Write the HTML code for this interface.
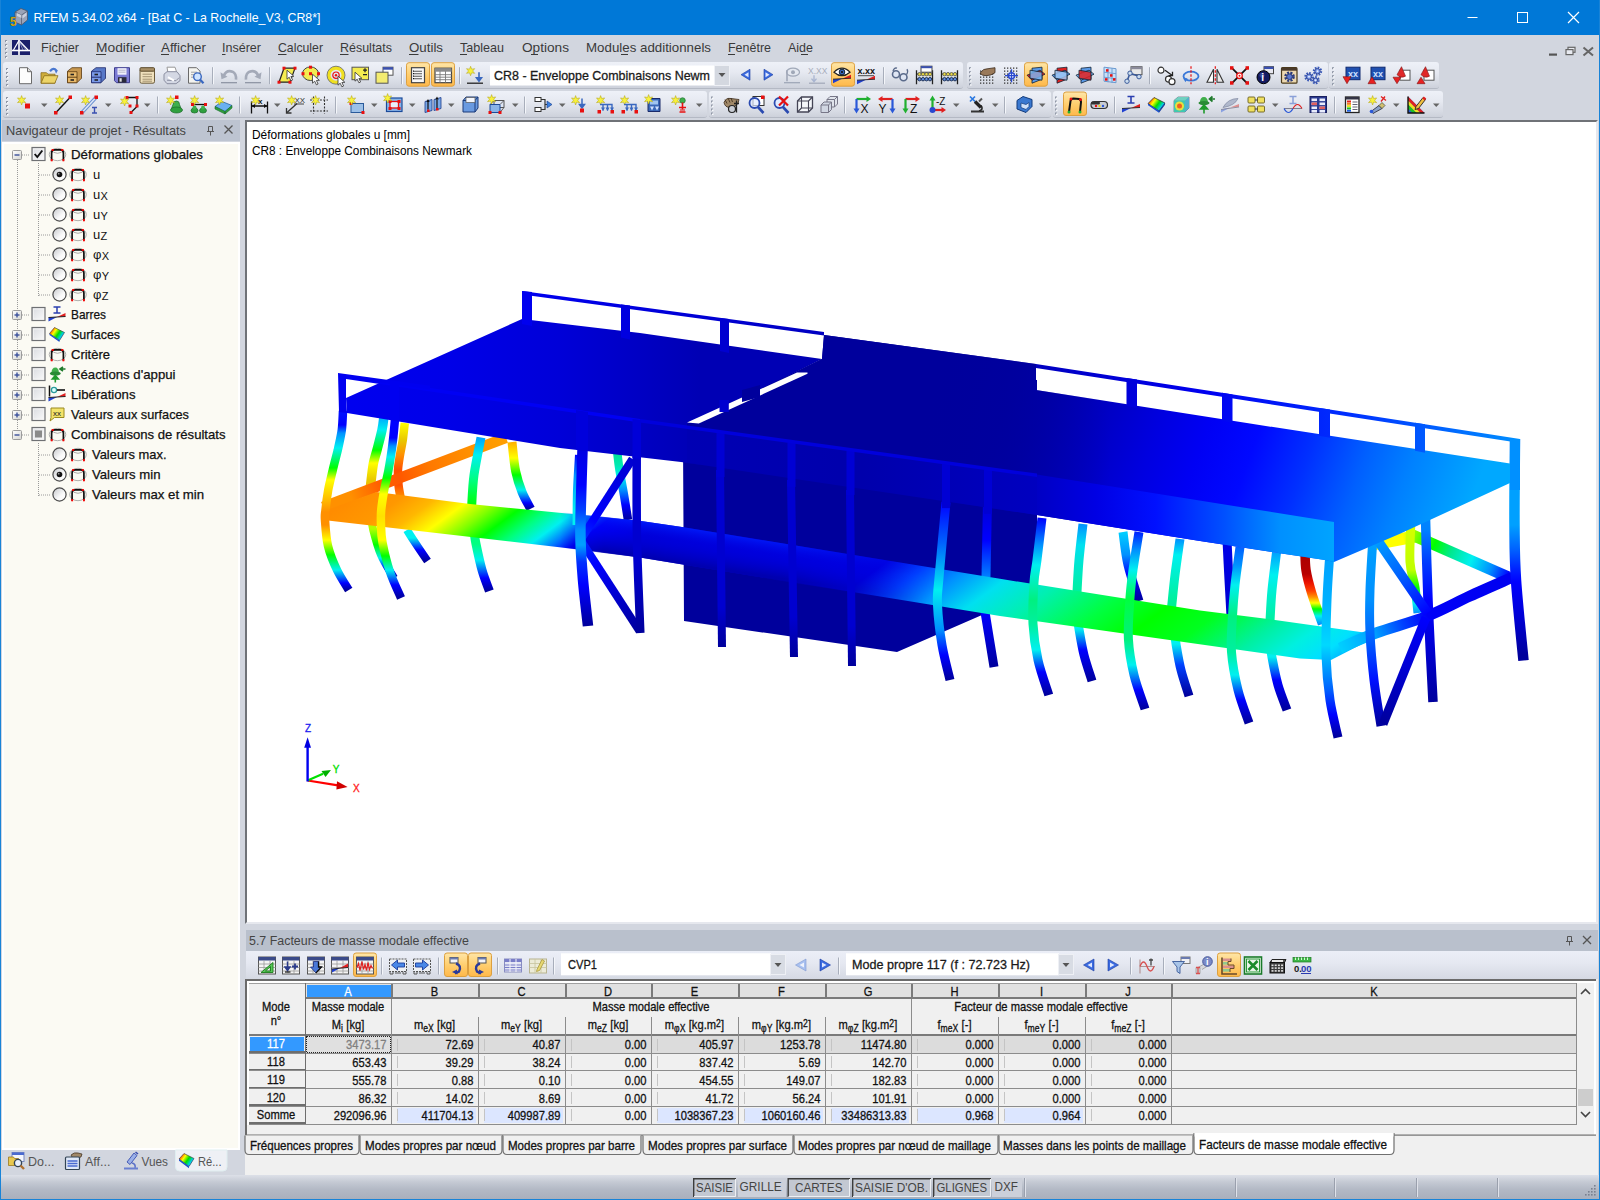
<!DOCTYPE html>
<html lang="fr"><head><meta charset="utf-8"><title>RFEM 5.34.02 x64 - [Bat C - La Rochelle_V3, CR8*]</title>
<style>
html,body{margin:0;padding:0;}
body{width:1600px;height:1200px;overflow:hidden;position:relative;background:#d2d6df;font-family:"Liberation Sans",sans-serif;font-size:12px;color:#222;}
div,svg{position:absolute;box-sizing:border-box;}
svg text{font-family:"Liberation Sans",sans-serif;}
svg.tx text{stroke:currentColor;stroke-width:0.25px;}
#titlebar{left:0;top:0;width:1600px;height:35px;background:#0078d7;}
#menubar{left:1px;top:35px;width:1598px;height:26px;background:#d2d6df;}
.tb{background:linear-gradient(#eef1f8 0%,#e6e9f1 40%,#d6dae3 80%,#cdd1db 100%);border-radius:3px;height:27px;border-bottom:1px solid #b4b9c4;}
#lborder{left:0;top:0;width:1px;height:1200px;background:#1883d7;}
#rborder{left:1599px;top:0;width:1px;height:1200px;background:#1883d7;}
#bborder{left:0;top:1199px;width:1600px;height:1px;background:#1883d7;}
#viewport{left:245px;top:120px;width:1353px;height:804px;background:#fff;border:2px solid #6f7277;border-right-color:#e6e8ee;border-bottom-color:#e6e8ee;overflow:hidden;}
#navhead{left:2px;top:120px;width:238px;height:21px;background:#bdc4d1;}
#navtree{left:2px;top:142px;width:238px;height:1008px;background:#fbfaf3;border:2px solid #fff;}
#status{left:1px;top:1175px;width:1598px;height:24px;background:linear-gradient(#dde0e8 0%,#c4c9d3 30%,#b3b9c5 60%,#a9afbc 100%);}

</style></head>
<body>
<div id="titlebar"></div>
<div id="menubar"></div>
<div class="tb" style="left:3px;top:62px;width:960px;"></div>
<div class="tb" style="left:967px;top:62px;width:361px;"></div>
<div class="tb" style="left:1329px;top:62px;width:110px;"></div>
<div class="tb" style="left:3px;top:90.5px;width:704px;"></div>
<div class="tb" style="left:709px;top:90.5px;width:342px;"></div>
<div class="tb" style="left:1053px;top:90.5px;width:390px;"></div>
<div id="status"></div>
<div id="lborder"></div><div id="rborder"></div><div id="bborder"></div>
<svg width="1600" height="1200" style="left:0;top:0;pointer-events:none;z-index:5">
<text x="33.5" y="22" font-size="13.5" fill="#fff" textLength="287" lengthAdjust="spacingAndGlyphs">RFEM 5.34.02 x64 - [Bat C - La Rochelle_V3, CR8*]</text>
<text x="41" y="52" font-size="12.4" fill="#3a3a3a" textLength="38" lengthAdjust="spacingAndGlyphs">Fichier</text>
<text x="96" y="52" font-size="12.4" fill="#3a3a3a" textLength="49" lengthAdjust="spacingAndGlyphs">Modifier</text>
<text x="161" y="52" font-size="12.4" fill="#3a3a3a" textLength="45" lengthAdjust="spacingAndGlyphs">Afficher</text>
<text x="222" y="52" font-size="12.4" fill="#3a3a3a" textLength="39" lengthAdjust="spacingAndGlyphs">Insérer</text>
<text x="278" y="52" font-size="12.4" fill="#3a3a3a" textLength="45" lengthAdjust="spacingAndGlyphs">Calculer</text>
<text x="340" y="52" font-size="12.4" fill="#3a3a3a" textLength="52" lengthAdjust="spacingAndGlyphs">Résultats</text>
<text x="409" y="52" font-size="12.4" fill="#3a3a3a" textLength="34" lengthAdjust="spacingAndGlyphs">Outils</text>
<text x="460" y="52" font-size="12.4" fill="#3a3a3a" textLength="44" lengthAdjust="spacingAndGlyphs">Tableau</text>
<text x="522" y="52" font-size="12.4" fill="#3a3a3a" textLength="47" lengthAdjust="spacingAndGlyphs">Options</text>
<text x="586" y="52" font-size="12.4" fill="#3a3a3a" textLength="125" lengthAdjust="spacingAndGlyphs">Modules additionnels</text>
<text x="728" y="52" font-size="12.4" fill="#3a3a3a" textLength="43" lengthAdjust="spacingAndGlyphs">Fenêtre</text>
<text x="788" y="52" font-size="12.4" fill="#3a3a3a" textLength="25" lengthAdjust="spacingAndGlyphs">Aide</text>
<path d="M55.5 54.500H61.5" stroke="#3a3a3a" stroke-width="1"/>
<path d="M96 54.500H106" stroke="#3a3a3a" stroke-width="1"/>
<path d="M161 54.500H169" stroke="#3a3a3a" stroke-width="1"/>
<path d="M222 54.500H225.5" stroke="#3a3a3a" stroke-width="1"/>
<path d="M278 54.500H286.5" stroke="#3a3a3a" stroke-width="1"/>
<path d="M340 54.500H348.5" stroke="#3a3a3a" stroke-width="1"/>
<path d="M409 54.500H418.5" stroke="#3a3a3a" stroke-width="1"/>
<path d="M460 54.500H467" stroke="#3a3a3a" stroke-width="1"/>
<path d="M531 54.500H538" stroke="#3a3a3a" stroke-width="1"/>
<path d="M621 54.500H628" stroke="#3a3a3a" stroke-width="1"/>
<path d="M728 54.500H735" stroke="#3a3a3a" stroke-width="1"/>
<path d="M801 54.500H808" stroke="#3a3a3a" stroke-width="1"/>
<path d="M1467.5 17.5h10" stroke="#fff" stroke-width="1" fill="none"/>
<rect x="1517.5" y="12.5" width="10" height="10" stroke="#fff" stroke-width="1" fill="none"/>
<path d="M1568 12l11 11M1579 12l-11 11" stroke="#fff" stroke-width="1.2" fill="none"/>
<path d="M1549 54.6h8" stroke="#555" stroke-width="2.2"/>
<rect x="1568" y="47.3" width="7" height="5" stroke="#666" stroke-width="1.2" fill="#e8eaf0"/><rect x="1566" y="49.6" width="7" height="5" stroke="#666" stroke-width="1.2" fill="#e8eaf0"/>
<path d="M1583.5 47.5l9.5 8M1593 47.5l-9.5 8" stroke="#666" stroke-width="2"/>
<rect x="693" y="1178" width="43" height="19" fill="#c3c8d2"/>
<path d="M693.7 1197V1178.7H736" fill="none" stroke="#3c3c3c" stroke-width="1.4"/><path d="M694 1196.5H735.5V1179" fill="none" stroke="#eef0f4" stroke-width="1"/>
<text x="696" y="1192" font-size="13" fill="#444" textLength="37" lengthAdjust="spacingAndGlyphs">SAISIE</text>
<rect x="738" y="1178" width="48" height="19" fill="#ccd0da"/>
<text x="739.6" y="1190.5" font-size="13" fill="#444" textLength="42.1" lengthAdjust="spacingAndGlyphs">GRILLE</text>
<rect x="787.5" y="1178" width="62.5" height="19" fill="#c3c8d2"/>
<path d="M788.2 1197V1178.7H850" fill="none" stroke="#3c3c3c" stroke-width="1.4"/><path d="M788.5 1196.5H849.5V1179" fill="none" stroke="#eef0f4" stroke-width="1"/>
<text x="795" y="1192" font-size="13" fill="#444" textLength="47.5" lengthAdjust="spacingAndGlyphs">CARTES</text>
<rect x="852" y="1178" width="79" height="19" fill="#c3c8d2"/>
<path d="M852.7 1197V1178.7H931" fill="none" stroke="#3c3c3c" stroke-width="1.4"/><path d="M853 1196.5H930.5V1179" fill="none" stroke="#eef0f4" stroke-width="1"/>
<text x="855" y="1192" font-size="13" fill="#444" textLength="73" lengthAdjust="spacingAndGlyphs">SAISIE D'OB.</text>
<rect x="933" y="1178" width="58" height="19" fill="#c3c8d2"/>
<path d="M933.7 1197V1178.7H991" fill="none" stroke="#3c3c3c" stroke-width="1.4"/><path d="M934 1196.5H990.5V1179" fill="none" stroke="#eef0f4" stroke-width="1"/>
<text x="936.5" y="1192" font-size="13" fill="#444" textLength="50.5" lengthAdjust="spacingAndGlyphs">GLIGNES</text>
<rect x="992" y="1178" width="30" height="19" fill="#ccd0da"/>
<text x="994.6" y="1190.5" font-size="13" fill="#444" textLength="23.4" lengthAdjust="spacingAndGlyphs">DXF</text>
<path d="M1024.5 1178v19" stroke="#9aa0ad"/><path d="M1025.5 1178v19" stroke="#dfe2ea"/>
<path d="M1235.5 1178v19" stroke="#9aa0ad"/><path d="M1236.5 1178v19" stroke="#dfe2ea"/>
<path d="M1334.5 1178v19" stroke="#9aa0ad"/><path d="M1335.5 1178v19" stroke="#dfe2ea"/>
<path d="M1416.5 1178v19" stroke="#9aa0ad"/><path d="M1417.5 1178v19" stroke="#dfe2ea"/>
<path d="M1497.5 1178v19" stroke="#9aa0ad"/><path d="M1498.5 1178v19" stroke="#dfe2ea"/>
<rect x="1594" y="1194" width="1.6" height="1.6" fill="#7a8190"/>
<rect x="1591" y="1194" width="1.6" height="1.6" fill="#7a8190"/>
<rect x="1588" y="1194" width="1.6" height="1.6" fill="#7a8190"/>
<rect x="1585" y="1194" width="1.6" height="1.6" fill="#7a8190"/>
<rect x="1594" y="1191" width="1.6" height="1.6" fill="#7a8190"/>
<rect x="1591" y="1191" width="1.6" height="1.6" fill="#7a8190"/>
<rect x="1588" y="1191" width="1.6" height="1.6" fill="#7a8190"/>
<rect x="1594" y="1188" width="1.6" height="1.6" fill="#7a8190"/>
<rect x="1591" y="1188" width="1.6" height="1.6" fill="#7a8190"/>
<rect x="1594" y="1185" width="1.6" height="1.6" fill="#7a8190"/>
<path d="M175.5 1150V1167Q175.5 1171 179.500 1171H223Q227 1171 227 1167V1150Z" fill="#eef0f5" stroke="#dfeef0" stroke-width="1"/>
<text x="28" y="1166" font-size="13" fill="#555" textLength="26.4" lengthAdjust="spacingAndGlyphs">Do...</text>
<text x="85" y="1166" font-size="13" fill="#555" textLength="25.5" lengthAdjust="spacingAndGlyphs">Aff...</text>
<text x="141.5" y="1166" font-size="13" fill="#555" textLength="26.5" lengthAdjust="spacingAndGlyphs">Vues</text>
<text x="198" y="1166" font-size="13" fill="#555" textLength="23.5" lengthAdjust="spacingAndGlyphs">Ré...</text>
<g transform="translate(8 1152)"><rect x="4" y="0.500" width="12" height="9" fill="#f4f6fc" stroke="#7a8ac0"/><rect x="4" y="0.500" width="12" height="2.500" fill="#4a6ad0"/><path d="M0.500 5h5l1 1.500h4v7h-10z" fill="#e8c850" stroke="#9a7a20" stroke-width="0.800"/><circle cx="10" cy="11" r="3.600" fill="#e8f0ff" stroke="#345" stroke-width="1.400"/><path d="M12.500 13.500l3.500 3.500" stroke="#b07030" stroke-width="2.400"/></g>
<g transform="translate(64 1152)"><path d="M7 3q3-3 7-2l4 1l-1 3l-8 2z" fill="#a08868" stroke="#3a2a1a" stroke-width="0.700"/><rect x="1.500" y="5" width="14" height="12.500" rx="1" fill="#dfe8f8" stroke="#345" stroke-width="1.200"/><path d="M3.500 9h10M3.500 11.500h10M3.500 14h10" stroke="#4a6ad0" stroke-width="1.300"/></g>
<g transform="translate(123 1152)"><path d="M11 1l3 2.500l-7 9l-3-2.500z" fill="#9ab0e8" stroke="#3a50b0" stroke-width="0.900"/><path d="M12.500 0l2.500 2" stroke="#3a50b0" stroke-width="1.600"/><path d="M9 11q4 1 3 5" stroke="#5a70c8" stroke-width="1.500" fill="none"/><path d="M1 17.500h14v-2h-14z" fill="#6a80d0"/></g>
<g transform="translate(178 1153)"><defs><linearGradient id="nvrain" x1="0" y1="0.200" x2="1" y2="0.800"><stop offset="0" stop-color="#f00"/><stop offset="0.300" stop-color="#ff0"/><stop offset="0.550" stop-color="#0d0"/><stop offset="0.800" stop-color="#0cf"/><stop offset="1" stop-color="#04f"/></linearGradient></defs><path d="M1 6l5-5.500l10 5l-5 8z" fill="url(#nvrain)" stroke="#333" stroke-width="0.600"/><path d="M1 6l10 7.500v1.800l-10-7.500z" fill="#1a4fd0"/></g>
</svg>
<svg width="1600" height="125" style="left:0;top:0;z-index:4">
<defs><linearGradient id="tbrain" x1="0" y1="0.2" x2="1" y2="0.8"><stop offset="0" stop-color="#f00"/><stop offset="0.3" stop-color="#ff0"/><stop offset="0.55" stop-color="#0d0"/><stop offset="0.8" stop-color="#0cf"/><stop offset="1" stop-color="#04f"/></linearGradient><linearGradient id="tborg" x1="0" y1="0" x2="0" y2="1"><stop offset="0" stop-color="#ffe6a8"/><stop offset="0.5" stop-color="#ffcf70"/><stop offset="1" stop-color="#ffb84a"/></linearGradient><linearGradient id="tbblu" x1="0" y1="0" x2="1" y2="1"><stop offset="0" stop-color="#9cc4f0"/><stop offset="1" stop-color="#3a6fc0"/></linearGradient></defs>
<rect x="6" y="68" width="2" height="2" fill="#9097a6"/><rect x="7" y="69" width="1.500" height="1.500" fill="#f8f9fc"/>
<rect x="6" y="72" width="2" height="2" fill="#9097a6"/><rect x="7" y="73" width="1.500" height="1.500" fill="#f8f9fc"/>
<rect x="6" y="76" width="2" height="2" fill="#9097a6"/><rect x="7" y="77" width="1.500" height="1.500" fill="#f8f9fc"/>
<rect x="6" y="80" width="2" height="2" fill="#9097a6"/><rect x="7" y="81" width="1.500" height="1.500" fill="#f8f9fc"/>
<rect x="6" y="84" width="2" height="2" fill="#9097a6"/><rect x="7" y="85" width="1.500" height="1.500" fill="#f8f9fc"/>
<rect x="6" y="97" width="2" height="2" fill="#9097a6"/><rect x="7" y="98" width="1.500" height="1.500" fill="#f8f9fc"/>
<rect x="6" y="101" width="2" height="2" fill="#9097a6"/><rect x="7" y="102" width="1.500" height="1.500" fill="#f8f9fc"/>
<rect x="6" y="105" width="2" height="2" fill="#9097a6"/><rect x="7" y="106" width="1.500" height="1.500" fill="#f8f9fc"/>
<rect x="6" y="109" width="2" height="2" fill="#9097a6"/><rect x="7" y="110" width="1.500" height="1.500" fill="#f8f9fc"/>
<rect x="6" y="113" width="2" height="2" fill="#9097a6"/><rect x="7" y="114" width="1.500" height="1.500" fill="#f8f9fc"/>
<g transform="translate(17 66.2)"><path d="M2.5 1.5h8l4 4v12h-12z" fill="#fdfdfd" stroke="#6a6a6a"/><path d="M10.5 1.5v4h4" fill="#dcdcdc" stroke="#6a6a6a"/></g>
<g transform="translate(40 66.2)"><path d="M10 5q3.5-4.500 6.500-.5" stroke="#4a78d0" stroke-width="2.2" fill="none"/><path d="M14.500 3.500l3.500.5l-2 3.500z" fill="#4a78d0"/><path d="M1 6.500h5.500l1.500 1.500h7v9h-14z" fill="#cfae3c" stroke="#8a6d1c" stroke-width="0.8"/><path d="M1 17l3.200-7.500h13.800l-3.200 7.500z" fill="#ecd468" stroke="#8a6d1c" stroke-width="0.8"/></g>
<g transform="translate(65 66.2)"><path d="M2.500 5l4.500-3.500h9.500v10.500l-4.500 4.500h-9.500z" fill="#c89850" stroke="#5a3a10" stroke-width="0.8"/><path d="M12 5.500h-9.500v11h9.500z" fill="#e8b868" stroke="#5a3a10" stroke-width="0.8"/><path d="M2.500 11h9.500" stroke="#5a3a10"/><rect x="5.500" y="7.500" width="3.500" height="1.600" fill="#222"/><rect x="5.500" y="13" width="3.500" height="1.600" fill="#222"/></g>
<g transform="translate(89 66.2)"><path d="M2.500 5l4.500-3.500h9.500v10.500l-4.500 4.500h-9.500z" fill="#5878c8" stroke="#202a6a" stroke-width="0.8"/><path d="M12 5.500h-9.500v11h9.500z" fill="#7a9ae8" stroke="#202a6a" stroke-width="0.8"/><path d="M2.500 11h9.500" stroke="#202a6a"/><rect x="5.500" y="7.500" width="3.500" height="1.600" fill="#222"/><rect x="5.500" y="13" width="3.500" height="1.600" fill="#222"/></g>
<g transform="translate(113 66.2)"><path d="M1.500 1.500h15v15h-13l-2-2z" fill="#7c7cd4" stroke="#3c3c8c"/><rect x="4.500" y="2" width="9" height="6.500" fill="#f0f0fc"/><path d="M5.500 4h7M5.500 6h7" stroke="#aab" stroke-width="0.8"/><rect x="5" y="11" width="8.500" height="5.500" fill="#2a2a3a"/><rect x="6.500" y="12" width="2.200" height="3.500" fill="#e0e0e0"/></g>
<g transform="translate(138 66.2)"><rect x="2" y="3" width="14.500" height="14" rx="1.500" fill="#efe0bc" stroke="#6a5a3a"/><rect x="2" y="1.500" width="14.500" height="3.500" rx="1" fill="#a89068" stroke="#5a4a2a"/><path d="M4.500 8h9.500M4.500 10.500h9.500M4.500 13h9.500M4.500 15h9.500" stroke="#9a8a6a" stroke-width="0.9"/></g>
<g transform="translate(162 66.2)"><path d="M5 1h8l2 6h-9z" fill="#fff" stroke="#999"/><path d="M2 8l3-2.500h10l3 4v5l-4 3h-9l-3-3.500z" fill="#d4d8e4" stroke="#8a8ea0"/><path d="M5 14l9 .5l3-3" stroke="#8a8ea0" fill="none"/><path d="M6 11l6 3.500" stroke="#fff" stroke-width="2"/></g>
<g transform="translate(186 66.2)"><path d="M2.500 1.500h8l3.500 3.500v12h-11.500z" fill="#f4f4f0" stroke="#6a6a6a"/><path d="M5 6h6M5 8.500h4M5 11h3" stroke="#999" stroke-width="0.9"/><circle cx="11.500" cy="10.500" r="3.800" fill="#cfe4ff" stroke="#3a68c0" stroke-width="1.400"/><path d="M14.200 13.500l3.300 3.500" stroke="#3a68c0" stroke-width="2.200"/></g>
<path d="M212.5 67.2v17" stroke="#a8aebb"/><path d="M213.5 67.2v17" stroke="#f4f6fa"/>
<g transform="translate(219 66.2)"><path d="M4.500 10q3-7 9-4.500q4 2 3.500 8" fill="none" stroke="#a4aab8" stroke-width="2.600"/><path d="M1.500 6l1 7l6-2.500z" fill="#a4aab8"/><path d="M2 16.500h16" stroke="#8a90a0" stroke-width="1.200"/></g>
<g transform="translate(244 66.2)"><path d="M14.500 10q-3-7-9-4.500q-4 2-3.500 8" fill="none" stroke="#a4aab8" stroke-width="2.600"/><path d="M17.500 6l-1 7l-6-2.500z" fill="#a4aab8"/><path d="M1 16.500h16" stroke="#8a90a0" stroke-width="1.200"/></g>
<path d="M269.5 67.2v17" stroke="#a8aebb"/><path d="M270.5 67.2v17" stroke="#f4f6fa"/>
<g transform="translate(278 66.2)"><path d="M6 2h11l-5 14h-11z" fill="#f4ec50" stroke="#222" stroke-width="1.200"/><rect x="4.5" y="0.5" width="3" height="3" fill="#e81010"/><rect x="15.5" y="0.5" width="3" height="3" fill="#e81010"/><rect x="-0.5" y="14.5" width="3" height="3" fill="#e81010"/><rect x="10.5" y="14.5" width="3" height="3" fill="#e81010"/><g transform="translate(9 4)"><path d="M0 0l0 9l2.200-2l1.700 3.600l1.700-.8l-1.700-3.500l3-.2z" fill="#fff" stroke="#333" stroke-width="0.8"/></g></g>
<g transform="translate(302 66.2)"><ellipse cx="8.500" cy="7.500" rx="8" ry="6.800" fill="#f4ec50" stroke="#444" stroke-width="1"/><rect x="7" y="-0.5" width="3" height="3" fill="#e81010"/><rect x="-0.5" y="6" width="3" height="3" fill="#e81010"/><rect x="15" y="6" width="3" height="3" fill="#e81010"/><rect x="7" y="6" width="3" height="3" fill="#e81010"/><g transform="translate(10.5 8)"><path d="M0 0l0 9l2.200-2l1.700 3.600l1.700-.8l-1.700-3.500l3-.2z" fill="#fff" stroke="#333" stroke-width="0.8"/></g></g>
<g transform="translate(327 66.2)"><circle cx="9" cy="9" r="7.200" fill="none" stroke="#f0e020" stroke-width="3.400"/><circle cx="9" cy="9" r="9" fill="none" stroke="#555" stroke-width="0.700"/><circle cx="9" cy="9" r="3.200" fill="none" stroke="#e81010" stroke-width="1.200"/><circle cx="9" cy="9" r="1.200" fill="#e81010"/><g transform="translate(11 10)"><path d="M0 0l0 9l2.200-2l1.700 3.600l1.700-.8l-1.700-3.500l3-.2z" fill="#fff" stroke="#333" stroke-width="0.8"/></g></g>
<g transform="translate(351 66.2)"><rect x="1" y="1" width="16.500" height="12.500" fill="#f4ec50" stroke="#555"/><path d="M12 4h4M14 2v4M12 8.500h4" stroke="#222" stroke-width="1.300"/><g transform="translate(4 6)"><path d="M0 0l0 9l2.200-2l1.700 3.600l1.700-.8l-1.700-3.500l3-.2z" fill="#fff" stroke="#333" stroke-width="0.8"/></g></g>
<g transform="translate(375 66.2)"><rect x="8" y="1" width="10" height="8" fill="#fff" stroke="#555"/><rect x="8" y="1" width="10" height="2.500" fill="#3a50b0"/><rect x="1" y="6" width="12" height="11" fill="#f4ec70" stroke="#555"/></g>
<path d="M401.5 67.2v17" stroke="#a8aebb"/><path d="M402.5 67.2v17" stroke="#f4f6fa"/>
<rect x="406.5" y="62.7" width="23" height="23.500" rx="2.500" fill="url(#tborg)" stroke="#dca040" stroke-width="1"/>
<g transform="translate(409 66.2)"><rect x="2.500" y="1.500" width="13" height="15" fill="#f8f8f8" stroke="#444" stroke-width="1.200"/><path d="M5 5h8M5 7.500h8M5 10h8M5 12.500h8" stroke="#555" stroke-width="1.100"/><path d="M4 5h1M4 7.500h1M4 10h1M4 12.500h1" stroke="#111" stroke-width="1.200"/></g>
<rect x="431.5" y="62.7" width="23" height="23.500" rx="2.500" fill="url(#tborg)" stroke="#dca040" stroke-width="1"/>
<g transform="translate(434 66.2)"><rect x="1" y="2" width="16.500" height="14.500" fill="#fff" stroke="#444" stroke-width="1.200"/><rect x="1" y="2" width="16.500" height="3.500" fill="#8a8a8a"/><path d="M1 8.500h16.500M1 11h16.500M1 13.500h16.500M6 5v11.500M11.500 5v11.500" stroke="#777" stroke-width="0.900"/></g>
<path d="M459.5 67.2v17" stroke="#a8aebb"/><path d="M460.5 67.2v17" stroke="#f4f6fa"/>
<g transform="translate(466 66.2)"><g transform="translate(0 0) scale(1)"><path d="M4.60 0.10L5.65 2.98L8.67 2.45L6.70 4.80L8.67 7.15L5.65 6.62L4.60 9.50L3.55 6.62L0.53 7.15L2.50 4.80L0.53 2.45L3.55 2.98Z" fill="#f8f23c" stroke="#b4a614" stroke-width="0.55"/></g><path d="M13 6v8M10.500 11.500l2.500 3.500l2.500-3.500z" stroke="#3a68c0" stroke-width="1.600" fill="#3a68c0"/><path d="M1 17h16" stroke="#222" stroke-width="1.300"/></g>
<g transform="translate(738 66.2)"><path d="M12 3l-9 5.500l9 5.500z" fill="#3a6ae0" stroke="#1a3aa0" stroke-width="0.600"/><path d="M10.500 6l-4 2.500l4 2.500z" fill="#dfe8ff"/></g>
<g transform="translate(761 66.2)"><path d="M3 3l9 5.500l-9 5.500z" fill="#3a6ae0" stroke="#1a3aa0" stroke-width="0.600"/><path d="M4.500 6l4 2.500l-4 2.500z" fill="#dfe8ff"/></g>
<g transform="translate(783 66.2)"><ellipse cx="10" cy="6" rx="6.500" ry="4" fill="#e4e8f0" stroke="#a0a8b8" stroke-width="1.200"/><circle cx="10" cy="6" r="2" fill="#a0a8b8"/><path d="M4 4v11" stroke="#a0a8b8" stroke-width="1.600"/><path d="M1 16.500h16" stroke="#a0a8b8" stroke-width="1.300"/></g>
<g transform="translate(808 66.2)"><text x="0" y="8" font-size="8.500" fill="#a8aebc" font-family="Liberation Serif,serif">X.XX</text><path d="M6 9v6M3.500 12.500l2.500 3l2.500-3" stroke="#a8b4d0" stroke-width="1.300" fill="none"/><path d="M1 17h16" stroke="#a0a8b8" stroke-width="1.200"/></g>
<rect x="831.5" y="62.7" width="23" height="23.500" rx="2.500" fill="url(#tborg)" stroke="#dca040" stroke-width="1"/>
<g transform="translate(833 66.2)"><path d="M1 6q8-8 16 0q-8 7-16 0z" fill="#fff" stroke="#222" stroke-width="1.200"/><circle cx="9" cy="5.800" r="2.800" fill="#3a68c0" stroke="#123"/><circle cx="9" cy="5.800" r="1.100" fill="#111"/><path d="M0 17V13L9 12.5Z" fill="#2040d0"/><path d="M9 12.5L18 8.5V12Z" fill="#e02020"/><path d="M0 13L18 12" stroke="#222" stroke-width="0.9"/></g>
<g transform="translate(857 66.2)"><text x="0.500" y="8" font-size="9" font-weight="bold" fill="#111" font-family="Liberation Serif,serif">x.xx</text><path d="M1 9.500h16" stroke="#222" stroke-width="0.800"/><g transform="translate(0 1)"><path d="M0 17V13L9 12.5Z" fill="#2040d0"/><path d="M9 12.5L18 8.5V12Z" fill="#e02020"/><path d="M0 13L18 12" stroke="#222" stroke-width="0.9"/></g></g>
<path d="M883.5 67.2v17" stroke="#a8aebb"/><path d="M884.5 67.2v17" stroke="#f4f6fa"/>
<g transform="translate(891 66.2)"><circle cx="5" cy="8" r="3.500" fill="#dfe6f4" stroke="#5a6a8a" stroke-width="1.600"/><circle cx="12.500" cy="11" r="3.500" fill="#dfe6f4" stroke="#5a6a8a" stroke-width="1.600"/><path d="M2 5q1-4 4-3M15.500 8.500q2-3 .5-5.500" stroke="#5a6a8a" stroke-width="1.300" fill="none"/></g>
<g transform="translate(915 66.2)"><path d="M1.500 4v14M17.500 4v14M1.500 8h16M1.500 13h16" stroke="#222" stroke-width="1.300" fill="none"/><circle cx="4.5" cy="8" r="1.700" fill="#e8d840" stroke="#665"/><circle cx="4.5" cy="13" r="1.700" fill="#5a8ae0" stroke="#235"/><circle cx="8" cy="8" r="1.700" fill="#e8d840" stroke="#665"/><circle cx="8" cy="13" r="1.700" fill="#5a8ae0" stroke="#235"/><circle cx="11.5" cy="8" r="1.700" fill="#e8d840" stroke="#665"/><circle cx="11.5" cy="13" r="1.700" fill="#5a8ae0" stroke="#235"/><circle cx="15" cy="8" r="1.700" fill="#e8d840" stroke="#665"/><circle cx="15" cy="13" r="1.700" fill="#5a8ae0" stroke="#235"/><rect x="6" y="0" width="11" height="6" fill="#fff" stroke="#444"/><rect x="6" y="0" width="11" height="2" fill="#3a50b0"/></g>
<g transform="translate(940 66.2)"><path d="M1.500 4v14M17.500 4v14M1.500 8h16M1.500 13h16" stroke="#222" stroke-width="1.300" fill="none"/><circle cx="4.5" cy="8" r="1.700" fill="#e8d840" stroke="#665"/><circle cx="4.5" cy="13" r="1.700" fill="#5a8ae0" stroke="#235"/><circle cx="8" cy="8" r="1.700" fill="#e8d840" stroke="#665"/><circle cx="8" cy="13" r="1.700" fill="#5a8ae0" stroke="#235"/><circle cx="11.5" cy="8" r="1.700" fill="#e8d840" stroke="#665"/><circle cx="11.5" cy="13" r="1.700" fill="#5a8ae0" stroke="#235"/><circle cx="15" cy="8" r="1.700" fill="#e8d840" stroke="#665"/><circle cx="15" cy="13" r="1.700" fill="#5a8ae0" stroke="#235"/></g>
<rect x="969" y="67.2" width="2" height="2" fill="#9097a6"/><rect x="970" y="68.2" width="1.500" height="1.500" fill="#f8f9fc"/>
<rect x="969" y="71.2" width="2" height="2" fill="#9097a6"/><rect x="970" y="72.2" width="1.500" height="1.500" fill="#f8f9fc"/>
<rect x="969" y="75.2" width="2" height="2" fill="#9097a6"/><rect x="970" y="76.2" width="1.500" height="1.500" fill="#f8f9fc"/>
<rect x="969" y="79.2" width="2" height="2" fill="#9097a6"/><rect x="970" y="80.2" width="1.500" height="1.500" fill="#f8f9fc"/>
<rect x="969" y="83.2" width="2" height="2" fill="#9097a6"/><rect x="970" y="84.2" width="1.500" height="1.500" fill="#f8f9fc"/>
<g transform="translate(978 66.2)"><path d="M2 5h15M2 8h15M2 11h15M2 14h15M2 17h15" stroke="#333" stroke-width="1.300" stroke-dasharray="1.300 1.700"/><path d="M2 7q3-5 8-4.500l7-1v5q-4 3-9 3q-4 0-6-2.500z" fill="#9a7a5a" stroke="#3a2a1a" stroke-width="0.800"/></g>
<g transform="translate(1002 66.2)"><path d="M2 5h15M2 8h15M2 11h15M2 14h15M2 17h15" stroke="#333" stroke-width="1.300" stroke-dasharray="1.300 1.700"/><path d="M2 2h15" stroke="#333" stroke-width="1.300" stroke-dasharray="1.300 1.700"/><circle cx="9.500" cy="9.500" r="3" fill="#fff" stroke="#2a4ad0" stroke-width="1.500"/><path d="M9.500 3v13M3 9.500h13" stroke="#2a4ad0" stroke-width="1.300"/></g>
<rect x="1024.5" y="62.7" width="23" height="23.500" rx="2.500" fill="url(#tborg)" stroke="#dca040" stroke-width="1"/>
<g transform="translate(1027 66.2)"><path d="M5 2l10-1v12l-10 4z" fill="#5a9ae8" stroke="#123" stroke-width="0.800"/><path d="M0 9l13-5l5 4l-13 6z" fill="#e02020" stroke="#123" stroke-width="0.800"/><path d="M3 4l12 2v8l-12-2z" fill="#7ab4f0" stroke="#123" stroke-width="0.800" fill-opacity="0.850"/></g>
<g transform="translate(1052 66.2)"><path d="M5 2l10-1v12l-10 4z" fill="#e02020" stroke="#123" stroke-width="0.800"/><path d="M0 9l13-5l5 4l-13 6z" fill="#5a9ae8" stroke="#123" stroke-width="0.800"/><path d="M3 4l12 2v8l-12-2z" fill="#a0c8f4" stroke="#123" stroke-width="0.800" fill-opacity="0.850"/></g>
<g transform="translate(1076 66.2)"><path d="M5 2l10-1v12l-10 4z" fill="#5a9ae8" stroke="#123" stroke-width="0.800"/><path d="M0 9l13-5l5 4l-13 6z" fill="#7ab4f0" stroke="#123" stroke-width="0.800"/><path d="M3 4l12 2v8l-12-2z" fill="#e02020" stroke="#123" stroke-width="0.800" fill-opacity="0.850"/></g>
<g transform="translate(1100 66.2)"><path d="M4 1l12 1.500v14l-12-1.500z" fill="#c8e0f8" stroke="#6a9ad0"/><path d="M8 1.500v14.500M12 2v14.500M4 6l12 1.500M4 11l12 1.500" stroke="#6a9ad0" stroke-width="0.900"/><rect x="6" y="3" width="2.5" height="2.5" fill="#e81010"/><rect x="10" y="8" width="2.5" height="2.5" fill="#e81010"/><rect x="13" y="12" width="2.5" height="2.5" fill="#e81010"/><rect x="5" y="12" width="2.5" height="2.5" fill="#e81010"/></g>
<g transform="translate(1124 66.2)"><rect x="7" y="0.500" width="11" height="8" fill="#e8e8e8" stroke="#555"/><rect x="7" y="0.500" width="11" height="2.500" fill="#8a8a9a"/><path d="M3 15l3-8l9 3" stroke="#3a5a9a" stroke-width="1.600" fill="none"/><circle cx="3" cy="15" r="2.200" fill="#cde" stroke="#3a5a9a"/><circle cx="6" cy="7" r="2.200" fill="#cde" stroke="#3a5a9a"/><circle cx="15" cy="10.500" r="2.200" fill="#cde" stroke="#3a5a9a"/></g>
<path d="M1149.5 67.2v17" stroke="#a8aebb"/><path d="M1150.5 67.2v17" stroke="#f4f6fa"/>
<g transform="translate(1157 66.2)"><circle cx="4" cy="4" r="3" fill="#fff" stroke="#333" stroke-width="1.200"/><circle cx="11.500" cy="13" r="3" fill="#fff" stroke="#333" stroke-width="1.200"/><circle cx="15" cy="15.500" r="3" fill="#fff" stroke="#333" stroke-width="1.200"/><path d="M8 4l7 5M15.500 5.500v4h-4" stroke="#222" stroke-width="1.300" fill="none"/></g>
<g transform="translate(1182 66.2)"><ellipse cx="9" cy="10" rx="7.500" ry="4.500" fill="none" stroke="#3a78d8" stroke-width="1.800"/><path d="M1 12l2.500 4l2-4z" fill="#3a78d8"/><path d="M9 0v18" stroke="#e81010" stroke-width="1.200" stroke-dasharray="2.500 1.500"/></g>
<g transform="translate(1206 66.2)"><path d="M7.500 3l-6.500 13h6.500z" fill="#fff" stroke="#333" stroke-width="1.100"/><path d="M11 3l6.500 13h-6.500z" fill="#e8e8e8" stroke="#333" stroke-width="1.100"/><path d="M9.300 0v18" stroke="#e81010" stroke-width="1.200" stroke-dasharray="2.500 1.500"/></g>
<g transform="translate(1230 66.2)"><path d="M2 2l15 15M17 2l-15 15" stroke="#111" stroke-width="1.700"/><rect x="0" y="0" width="3.5" height="3.5" fill="#e81010"/><rect x="15.5" y="0" width="3.5" height="3.5" fill="#e81010"/><rect x="0" y="15" width="3.5" height="3.5" fill="#e81010"/><rect x="15.5" y="15" width="3.5" height="3.5" fill="#e81010"/><circle cx="9.500" cy="9.500" r="2.800" fill="#fff" stroke="#e81010" stroke-width="1.300"/><circle cx="9.500" cy="9.500" r="1" fill="#e81010"/></g>
<g transform="translate(1256 66.2)"><rect x="8" y="0.500" width="9.500" height="7" fill="#e8e8f0" stroke="#444"/><rect x="8" y="0.500" width="9.500" height="2.300" fill="#3a50b0"/><circle cx="7.500" cy="11" r="6.500" fill="#141a60" stroke="#000"/><circle cx="6" cy="9" r="2.500" fill="#4a58b0" fill-opacity="0.600"/><text x="5.200" y="15" font-size="10" font-weight="bold" fill="#fff" font-family="Liberation Serif,serif">i</text></g>
<g transform="translate(1280 66.2)"><rect x="1.500" y="1.500" width="15.500" height="15.500" rx="1" fill="#ecd8b0" stroke="#4a3a1a" stroke-width="1.200"/><rect x="1.500" y="1.500" width="15.500" height="3" fill="#4a3a2a"/><circle cx="9.500" cy="10.500" r="4" fill="none" stroke="#2a3a7a" stroke-width="2.600" stroke-dasharray="2 1.200"/><circle cx="9.500" cy="10.500" r="2.800" fill="#5a78d0" stroke="#2a3a7a"/></g>
<g transform="translate(1304 66.2)"><circle cx="5" cy="10.5" r="3.5" fill="none" stroke="#3a5ab8" stroke-width="2.400" stroke-dasharray="1.600 1.100"/><circle cx="5" cy="10.5" r="2.7" fill="#7a9ae8" stroke="#2a3a8a" stroke-width="0.800"/><circle cx="5" cy="10.5" r="1" fill="#e8eefc"/><circle cx="13.5" cy="5" r="3.5" fill="none" stroke="#3a5ab8" stroke-width="2.400" stroke-dasharray="1.600 1.100"/><circle cx="13.5" cy="5" r="2.7" fill="#7a9ae8" stroke="#2a3a8a" stroke-width="0.800"/><circle cx="13.5" cy="5" r="1" fill="#e8eefc"/><circle cx="11.5" cy="14" r="3" fill="none" stroke="#3a5ab8" stroke-width="2.400" stroke-dasharray="1.600 1.100"/><circle cx="11.5" cy="14" r="2.2" fill="#7a9ae8" stroke="#2a3a8a" stroke-width="0.800"/><circle cx="11.5" cy="14" r="1" fill="#e8eefc"/></g>
<rect x="1332" y="67.2" width="2" height="2" fill="#9097a6"/><rect x="1333" y="68.2" width="1.500" height="1.500" fill="#f8f9fc"/>
<rect x="1332" y="71.2" width="2" height="2" fill="#9097a6"/><rect x="1333" y="72.2" width="1.500" height="1.500" fill="#f8f9fc"/>
<rect x="1332" y="75.2" width="2" height="2" fill="#9097a6"/><rect x="1333" y="76.2" width="1.500" height="1.500" fill="#f8f9fc"/>
<rect x="1332" y="79.2" width="2" height="2" fill="#9097a6"/><rect x="1333" y="80.2" width="1.500" height="1.500" fill="#f8f9fc"/>
<rect x="1332" y="83.2" width="2" height="2" fill="#9097a6"/><rect x="1333" y="84.2" width="1.500" height="1.500" fill="#f8f9fc"/>
<g transform="translate(1342 66.2)"><rect x="4" y="1" width="14" height="12.500" fill="#2050b0" stroke="#102a70"/><text x="6" y="10.500" font-size="9" font-weight="bold" fill="#cfe0ff">xx</text><path d="M1 10.500h8l-4 7z" fill="#e82020" stroke="#801010" stroke-width="0.600"/></g>
<g transform="translate(1367 66.2)"><rect x="4" y="1" width="14" height="12.500" fill="#2050b0" stroke="#102a70"/><text x="6" y="10.500" font-size="9" font-weight="bold" fill="#cfe0ff">xx</text><path d="M1 17.500h8l-4-7z" fill="#e82020" stroke="#801010" stroke-width="0.600"/></g>
<g transform="translate(1392 66.2)"><rect x="8" y="4" width="10" height="10" fill="#fff" stroke="#555"/><path d="M5 8.500l4.500-8l4 9.500q-4.500 2.500-8.500-1.500z" fill="#e02828" stroke="#801010" stroke-width="0.600"/><path d="M1 11h8l-4 6.500z" fill="#e82020" stroke="#801010" stroke-width="0.600"/></g>
<g transform="translate(1416 66.2)"><rect x="8" y="4" width="10" height="10" fill="#fff" stroke="#555"/><path d="M5 8.500l4.500-8l4 9.500q-4.500 2.500-8.500-1.500z" fill="#e02828" stroke="#801010" stroke-width="0.600"/><path d="M1 17.500h8l-4-6.500z" fill="#e82020" stroke="#801010" stroke-width="0.600"/></g>
<g transform="translate(17 95.5)"><g transform="translate(0 0) scale(1)"><path d="M4.60 0.10L5.65 2.98L8.67 2.45L6.70 4.80L8.67 7.15L5.65 6.62L4.60 9.50L3.55 6.62L0.53 7.15L2.50 4.80L0.53 2.45L3.55 2.98Z" fill="#f8f23c" stroke="#b4a614" stroke-width="0.55"/></g><rect x="8" y="8" width="5" height="5" fill="#e81010"/></g>
<path d="M41 103.5h6.500l-3.250 3.500z" fill="#666"/>
<g transform="translate(54 95.5)"><path d="M2 17l14-15" stroke="#111" stroke-width="1.400"/><rect x="0" y="15.5" width="3.5" height="3.5" fill="#e81010"/><rect x="14.5" y="0" width="3.5" height="3.5" fill="#e81010"/><g transform="translate(1 0) scale(1)"><path d="M4.60 0.10L5.65 2.98L8.67 2.45L6.70 4.80L8.67 7.15L5.65 6.62L4.60 9.50L3.55 6.62L0.53 7.15L2.50 4.80L0.53 2.45L3.55 2.98Z" fill="#f8f23c" stroke="#b4a614" stroke-width="0.55"/></g></g>
<g transform="translate(80 95.5)"><path d="M2 17l14-15" stroke="#6a90d0" stroke-width="3.400"/><path d="M2 17l14-15" stroke="#dfe8f8" stroke-width="1.400"/><rect x="0" y="15.5" width="3.5" height="3.5" fill="#e81010"/><rect x="14.5" y="0" width="3.5" height="3.5" fill="#e81010"/><g transform="translate(1 0) scale(1)"><path d="M4.60 0.10L5.65 2.98L8.67 2.45L6.70 4.80L8.67 7.15L5.65 6.62L4.60 9.50L3.55 6.62L0.53 7.15L2.50 4.80L0.53 2.45L3.55 2.98Z" fill="#f8f23c" stroke="#b4a614" stroke-width="0.55"/></g><path d="M12 12h5M12 17.500h5M14.500 12v5.500" stroke="#3a50b0" stroke-width="1.400"/></g>
<path d="M105 103.5h6.500l-3.250 3.500z" fill="#666"/>
<g transform="translate(120 95.5)"><path d="M7 2h10v9l-6 6" stroke="#111" stroke-width="1.300" fill="none"/><rect x="5.5" y="0.5" width="3" height="3" fill="#e81010"/><rect x="15.5" y="0.5" width="3" height="3" fill="#e81010"/><rect x="15.5" y="9" width="3" height="3" fill="#e81010"/><rect x="8.5" y="9" width="3" height="3" fill="#e81010"/><rect x="9.5" y="15.5" width="3" height="3" fill="#e81010"/><g transform="translate(0 1) scale(1)"><path d="M4.60 0.10L5.65 2.98L8.67 2.45L6.70 4.80L8.67 7.15L5.65 6.62L4.60 9.50L3.55 6.62L0.53 7.15L2.50 4.80L0.53 2.45L3.55 2.98Z" fill="#f8f23c" stroke="#b4a614" stroke-width="0.55"/></g></g>
<path d="M144 103.5h6.500l-3.250 3.500z" fill="#666"/>
<path d="M157.5 96.5v17" stroke="#a8aebb"/><path d="M158.5 96.5v17" stroke="#f4f6fa"/>
<g transform="translate(165 95.5)"><path d="M8 9q0-3.500 3.500-3.500q3 0 3 3.500l1.500 4h-9.500z" fill="#3fb04c" stroke="#1a6a28" stroke-width="0.700"/><ellipse cx="11.500" cy="14.500" rx="6" ry="3" fill="#2fa03e" stroke="#1a6a28" stroke-width="0.700"/><g transform="translate(1 0) scale(1)"><path d="M4.60 0.10L5.65 2.98L8.67 2.45L6.70 4.80L8.67 7.15L5.65 6.62L4.60 9.50L3.55 6.62L0.53 7.15L2.50 4.80L0.53 2.45L3.55 2.98Z" fill="#f8f23c" stroke="#b4a614" stroke-width="0.55"/></g><rect x="10" y="0" width="3.5" height="3.5" fill="#e81010"/></g>
<g transform="translate(189 95.5)"><path d="M3 9h14" stroke="#111" stroke-width="1.300"/><ellipse cx="5.500" cy="15" rx="3.500" ry="2.500" fill="#2fa03e" stroke="#1a6a28" stroke-width="0.700"/><ellipse cx="14" cy="15" rx="3.500" ry="2.500" fill="#2fa03e" stroke="#1a6a28" stroke-width="0.700"/><circle cx="5.500" cy="12" r="2" fill="#3fb04c"/><circle cx="14" cy="12" r="2" fill="#3fb04c"/><rect x="2" y="7.5" width="3" height="3" fill="#e81010"/><rect x="15" y="7.5" width="3" height="3" fill="#e81010"/><g transform="translate(1 0) scale(1)"><path d="M4.60 0.10L5.65 2.98L8.67 2.45L6.70 4.80L8.67 7.15L5.65 6.62L4.60 9.50L3.55 6.62L0.53 7.15L2.50 4.80L0.53 2.45L3.55 2.98Z" fill="#f8f23c" stroke="#b4a614" stroke-width="0.55"/></g></g>
<g transform="translate(214 95.5)"><path d="M1 11l7-5l10 4l-7 6z" fill="#6ab0f0" stroke="#1a5a9a" stroke-width="0.700"/><path d="M1 11l10 5v2.500l-10-5zM11 16l7-6v2.500l-7 6z" fill="#2fa03e" stroke="#1a6a28" stroke-width="0.600"/><g transform="translate(1 0) scale(1)"><path d="M4.60 0.10L5.65 2.98L8.67 2.45L6.70 4.80L8.67 7.15L5.65 6.62L4.60 9.50L3.55 6.62L0.53 7.15L2.50 4.80L0.53 2.45L3.55 2.98Z" fill="#f8f23c" stroke="#b4a614" stroke-width="0.55"/></g></g>
<path d="M239.5 96.5v17" stroke="#a8aebb"/><path d="M240.5 96.5v17" stroke="#f4f6fa"/>
<g transform="translate(250 95.5)"><path d="M1.500 6v12M17.500 6v12M1.500 10.500h16" stroke="#111" stroke-width="1.300"/><path d="M1.500 10.500l3.500-2v4zM17.500 10.500l-3.500-2v4z" fill="#111"/><text x="8" y="8" font-size="8" font-weight="bold" fill="#111">x</text><g transform="translate(1 0) scale(1)"><path d="M4.60 0.10L5.65 2.98L8.67 2.45L6.70 4.80L8.67 7.15L5.65 6.62L4.60 9.50L3.55 6.62L0.53 7.15L2.50 4.80L0.53 2.45L3.55 2.98Z" fill="#f8f23c" stroke="#b4a614" stroke-width="0.55"/></g></g>
<path d="M274 103.5h6.500l-3.250 3.500z" fill="#666"/>
<g transform="translate(286 95.5)"><path d="M1 17l10-9" stroke="#333" stroke-width="1.300"/><path d="M0.500 12.500v5h5" stroke="#333" stroke-width="1.300" fill="none"/><text x="8.500" y="7" font-size="8" fill="#333" font-family="Liberation Serif,serif">XX</text><path d="M8 8.500h10" stroke="#333" stroke-width="0.900"/><g transform="translate(1 0) scale(1)"><path d="M4.60 0.10L5.65 2.98L8.67 2.45L6.70 4.80L8.67 7.15L5.65 6.62L4.60 9.50L3.55 6.62L0.53 7.15L2.50 4.80L0.53 2.45L3.55 2.98Z" fill="#f8f23c" stroke="#b4a614" stroke-width="0.55"/></g></g>
<g transform="translate(310 95.5)"><path d="M0 4.500h18M0 15.500h18M3.500 1v17M14.500 1v17" stroke="#333" stroke-width="1.100" stroke-dasharray="2 1.300"/><g transform="translate(1 0) scale(1)"><path d="M4.60 0.10L5.65 2.98L8.67 2.45L6.70 4.80L8.67 7.15L5.65 6.62L4.60 9.50L3.55 6.62L0.53 7.15L2.50 4.80L0.53 2.45L3.55 2.98Z" fill="#f8f23c" stroke="#b4a614" stroke-width="0.55"/></g></g>
<path d="M335.5 96.5v17" stroke="#a8aebb"/><path d="M336.5 96.5v17" stroke="#f4f6fa"/>
<g transform="translate(346 95.5)"><rect x="5" y="8" width="12.500" height="9" fill="#9cc0e8" stroke="#2a5a9a"/><rect x="3.5" y="6.5" width="3" height="3" fill="#e81010"/><rect x="15.5" y="15.5" width="3" height="3" fill="#e81010"/><g transform="translate(1 0) scale(1)"><path d="M4.60 0.10L5.65 2.98L8.67 2.45L6.70 4.80L8.67 7.15L5.65 6.62L4.60 9.50L3.55 6.62L0.53 7.15L2.50 4.80L0.53 2.45L3.55 2.98Z" fill="#f8f23c" stroke="#b4a614" stroke-width="0.55"/></g></g>
<path d="M371 103.5h6.500l-3.250 3.500z" fill="#666"/>
<g transform="translate(385 95.5)"><rect x="1.500" y="2.500" width="15.500" height="13.500" fill="#8ab4e8" stroke="#1a4a9a" stroke-width="1.200"/><rect x="5" y="6" width="8.500" height="6.500" fill="#e8f0fc" stroke="#e81010" stroke-width="1.300"/><rect x="3.5" y="4.5" width="3" height="3" fill="#e81010"/><rect x="12.5" y="4.5" width="3" height="3" fill="#e81010"/><rect x="3.5" y="11.5" width="3" height="3" fill="#e81010"/><rect x="12.5" y="11.5" width="3" height="3" fill="#e81010"/><g transform="translate(-2 -2) scale(1)"><path d="M4.60 0.10L5.65 2.98L8.67 2.45L6.70 4.80L8.67 7.15L5.65 6.62L4.60 9.50L3.55 6.62L0.53 7.15L2.50 4.80L0.53 2.45L3.55 2.98Z" fill="#f8f23c" stroke="#b4a614" stroke-width="0.55"/></g></g>
<path d="M409 103.5h6.500l-3.250 3.500z" fill="#666"/>
<g transform="translate(424 95.5)"><path d="M1 6l7-2v11l-7 2zM10 4l7-2v11l-7 2z" fill="#7aa8e8" stroke="#1a3a8a" stroke-width="0.800"/><path d="M4 14v-8M13 13v-9" stroke="#111" stroke-width="1.200"/><path d="M4 3.500l-1.700 3h3.400zM13 1l-1.700 3h3.400z" fill="#111"/><rect x="3" y="14" width="2.5" height="2.5" fill="#e81010"/><rect x="12" y="12.5" width="2.5" height="2.5" fill="#e81010"/></g>
<path d="M448 103.5h6.500l-3.250 3.500z" fill="#666"/>
<g transform="translate(461 95.5)"><path d="M2 5l3-3.500h12v11l-3 4h-12z" fill="#6a9ae0" stroke="#1a3a7a"/><path d="M2 5h12v11.500M14 5l3-3.500" stroke="#1a3a7a" fill="none"/><rect x="5" y="2" width="9" height="5" fill="#f4f6fc" stroke="#555" stroke-width="0.700"/></g>
<g transform="translate(488 95.5)"><path d="M6 5h10v7h-10z" fill="#dfe6f4" stroke="#555"/><path d="M2 9h10v8h-10z" fill="#8ab4e8" stroke="#1a4a9a"/><path d="M2 9l4-4M12 9l4-4M12 17l4-5" stroke="#555" stroke-width="0.900"/><rect x="0.5" y="15.5" width="3" height="3" fill="#e81010"/><rect x="10.5" y="15.5" width="3" height="3" fill="#e81010"/><g transform="translate(-1 -1) scale(1)"><path d="M4.60 0.10L5.65 2.98L8.67 2.45L6.70 4.80L8.67 7.15L5.65 6.62L4.60 9.50L3.55 6.62L0.53 7.15L2.50 4.80L0.53 2.45L3.55 2.98Z" fill="#f8f23c" stroke="#b4a614" stroke-width="0.55"/></g></g>
<path d="M512 103.5h6.500l-3.250 3.500z" fill="#666"/>
<path d="M524.5 96.5v17" stroke="#a8aebb"/><path d="M525.5 96.5v17" stroke="#f4f6fa"/>
<g transform="translate(534 95.5)"><rect x="1" y="2" width="6" height="4" fill="#fff" stroke="#333"/><rect x="1" y="12" width="6" height="4" fill="#fff" stroke="#333"/><path d="M7 4h4v10h-4M11 9h3" stroke="#333" stroke-width="1.200" fill="none"/><path d="M13 5.500l5 3.500l-5 3.500z" fill="#3a80e0" stroke="#1a3a8a" stroke-width="0.600"/></g>
<path d="M559 103.5h6.500l-3.250 3.500z" fill="#666"/>
<g transform="translate(571 95.5)"><g transform="translate(0 0) scale(1)"><path d="M4.60 0.10L5.65 2.98L8.67 2.45L6.70 4.80L8.67 7.15L5.65 6.62L4.60 9.50L3.55 6.62L0.53 7.15L2.50 4.80L0.53 2.45L3.55 2.98Z" fill="#f8f23c" stroke="#b4a614" stroke-width="0.55"/></g><path d="M11 3v8M8.500 9l2.500 3.500l2.500-3.500z" stroke="#3a68c0" stroke-width="1.500" fill="#3a68c0"/><rect x="9" y="13" width="4" height="4" fill="#e81010"/></g>
<g transform="translate(596 95.5)"><g transform="translate(0 0) scale(1)"><path d="M4.60 0.10L5.65 2.98L8.67 2.45L6.70 4.80L8.67 7.15L5.65 6.62L4.60 9.50L3.55 6.62L0.53 7.15L2.50 4.80L0.53 2.45L3.55 2.98Z" fill="#f8f23c" stroke="#b4a614" stroke-width="0.55"/></g><path d="M4 9h12v6M7 9v6M11.500 9v6" stroke="#3a68c0" stroke-width="1.400" fill="none"/><path d="M5 12l2 3.500l2-3.500zM9.500 12l2 3.500l2-3.500zM14 12l2 3.500l2-3.500z" fill="#3a68c0"/><rect x="1.5" y="14.5" width="3.5" height="3.5" fill="#e81010"/><rect x="14.5" y="14.5" width="3.5" height="3.5" fill="#e81010"/></g>
<g transform="translate(620 95.5)"><g transform="translate(0 0) scale(1)"><path d="M4.60 0.10L5.65 2.98L8.67 2.45L6.70 4.80L8.67 7.15L5.65 6.62L4.60 9.50L3.55 6.62L0.53 7.15L2.50 4.80L0.53 2.45L3.55 2.98Z" fill="#f8f23c" stroke="#b4a614" stroke-width="0.55"/></g><path d="M4 9h12v6M7 9v6M11.500 9v6" stroke="#3a68c0" stroke-width="1.400" fill="none"/><path d="M5 12l2 3.500l2-3.500zM9.500 12l2 3.500l2-3.500zM14 12l2 3.500l2-3.500z" fill="#3a68c0"/><rect x="1.5" y="14.5" width="3.5" height="3.5" fill="#e81010"/><rect x="14.5" y="14.5" width="3.5" height="3.5" fill="#e81010"/></g>
<g transform="translate(645 95.5)"><path d="M3 3h12v13h-12z" fill="#3a68b8" stroke="#1a2a6a"/><path d="M5 5h8v4h-8z" fill="#a0c4f0"/><path d="M5 11l2 4l2-4zM10 11l2 4l2-4z" fill="#cfe0ff"/><g transform="translate(-1 -1) scale(1)"><path d="M4.60 0.10L5.65 2.98L8.67 2.45L6.70 4.80L8.67 7.15L5.65 6.62L4.60 9.50L3.55 6.62L0.53 7.15L2.50 4.80L0.53 2.45L3.55 2.98Z" fill="#f8f23c" stroke="#b4a614" stroke-width="0.55"/></g></g>
<g transform="translate(671 95.5)"><g transform="translate(0 0) scale(1)"><path d="M4.60 0.10L5.65 2.98L8.67 2.45L6.70 4.80L8.67 7.15L5.65 6.62L4.60 9.50L3.55 6.62L0.53 7.15L2.50 4.80L0.53 2.45L3.55 2.98Z" fill="#f8f23c" stroke="#b4a614" stroke-width="0.55"/></g><circle cx="11.500" cy="5" r="2.800" fill="#3fb04c" stroke="#1a6a28" stroke-width="0.600"/><path d="M11.500 7v7" stroke="#e81010" stroke-width="1.600"/><path d="M8 12h7M8.500 16.500h6" stroke="#e81010" stroke-width="1.400"/><path d="M9 14.500h5" stroke="#e81010" stroke-width="1"/></g>
<path d="M696 103.5h6.500l-3.250 3.500z" fill="#666"/>
<rect x="711" y="96.5" width="2" height="2" fill="#9097a6"/><rect x="712" y="97.5" width="1.500" height="1.500" fill="#f8f9fc"/>
<rect x="711" y="100.5" width="2" height="2" fill="#9097a6"/><rect x="712" y="101.5" width="1.500" height="1.500" fill="#f8f9fc"/>
<rect x="711" y="104.5" width="2" height="2" fill="#9097a6"/><rect x="712" y="105.5" width="1.500" height="1.500" fill="#f8f9fc"/>
<rect x="711" y="108.5" width="2" height="2" fill="#9097a6"/><rect x="712" y="109.5" width="1.500" height="1.500" fill="#f8f9fc"/>
<rect x="711" y="112.5" width="2" height="2" fill="#9097a6"/><rect x="712" y="113.5" width="1.500" height="1.500" fill="#f8f9fc"/>
<g transform="translate(722 95.5)"><path d="M2 7q2-5 7-4l8 1-1 4q-3 4-8 4q-5 0-6-5z" fill="#a08868" stroke="#3a2a1a" stroke-width="0.800"/><path d="M3 4l2 4M6 2.500l2 4.500M9 2.500l1.500 4" stroke="#3a2a1a" stroke-width="0.800"/><circle cx="10" cy="13.500" r="3.500" fill="#c8ccd4" stroke="#222" stroke-width="1.200"/><path d="M14.500 5v12M12 8h5" stroke="#222" stroke-width="1.300"/></g>
<g transform="translate(747 95.5)"><rect x="6" y="1" width="11" height="9" fill="#fff" stroke="#333"/><circle cx="7.500" cy="7.500" r="5" fill="#dfeaff" fill-opacity="0.700" stroke="#2a4ab0" stroke-width="1.800"/><path d="M11 11.500l5.500 6" stroke="#2a4ab0" stroke-width="2.600"/><rect x="14" y="0" width="3.5" height="3.5" fill="#e81010"/></g>
<g transform="translate(772 95.5)"><circle cx="7.500" cy="7.500" r="5" fill="#dfeaff" stroke="#2a4ab0" stroke-width="1.800"/><path d="M11 11.500l5.500 6" stroke="#2a4ab0" stroke-width="2.600"/><path d="M7 1l9 9M16 1l-9 9" stroke="#e81010" stroke-width="2.200"/></g>
<g transform="translate(796 95.5)"><path d="M1.500 5.500l4-4h11v11l-4 4h-11z" fill="#f4f6fa" stroke="#445" stroke-width="1.300"/><path d="M1.500 5.500h11v11M12.500 5.500l4-4M5.500 1.500v11h11M5.500 12.500l-4 4" stroke="#445" stroke-width="1.100" fill="none"/></g>
<g transform="translate(820 95.5)"><path d="M7 4l3-3h7.500v7.500l-3 3h-7.500z" fill="#e0e4ec" stroke="#778"/><path d="M7 4h7.500v7.500M14.500 4l3-3" stroke="#778" fill="none"/><path d="M1 9.500l3-3h7.500v7.500l-3 3h-7.500z" fill="#d0d6e2" stroke="#778"/><path d="M1 9.500h7.500v7.500M8.500 9.500l3-3" stroke="#778" fill="none"/></g>
<path d="M844.5 96.5v17" stroke="#a8aebb"/><path d="M845.5 96.5v17" stroke="#f4f6fa"/>
<g transform="translate(853 95.5)"><path d="M3.500 3.500h12" stroke="#20b030" stroke-width="2.200"/><path d="M13.500 0.500l4.500 3l-4.500 3z" fill="#20b030"/><path d="M3.500 3.500v11" stroke="#2a58d8" stroke-width="2.200"/><path d="M0.500 13l3 5l3-5z" fill="#2a58d8"/><text x="7.500" y="17.500" font-size="12" fill="#111" font-family="Liberation Serif,serif">X</text></g>
<g transform="translate(878 95.5)"><path d="M2.500 3.500h12" stroke="#e02020" stroke-width="2.200"/><path d="M4.500 0.500l-4.500 3l4.500 3z" fill="#e02020"/><path d="M14.500 3.500v11" stroke="#2a58d8" stroke-width="2.200"/><path d="M11.500 13l3 5l3-5z" fill="#2a58d8"/><text x="0.500" y="17.500" font-size="12" fill="#111" font-family="Liberation Serif,serif">Y</text></g>
<g transform="translate(902 95.5)"><path d="M3.500 3.500h12" stroke="#e02020" stroke-width="2.200"/><path d="M13.500 0.500l4.500 3l-4.500 3z" fill="#e02020"/><path d="M3.500 3.500v11" stroke="#20b030" stroke-width="2.200"/><path d="M0.500 13l3 5l3-5z" fill="#20b030"/><text x="8" y="17.500" font-size="12" fill="#111" font-family="Liberation Serif,serif">Z</text></g>
<g transform="translate(928 95.5)"><path d="M4.500 14.500v-11" stroke="#20b030" stroke-width="2.200"/><path d="M1.500 5l3-5l3 5z" fill="#20b030"/><path d="M4.500 14.500h11" stroke="#e02020" stroke-width="2.200"/><path d="M13.500 11.500l4.500 3l-4.500 3z" fill="#e02020"/><circle cx="4.500" cy="14.500" r="3" fill="#2a48d0"/><text x="8" y="9" font-size="10" fill="#111" font-family="Liberation Serif,serif">-Z</text></g>
<path d="M953 103.5h6.500l-3.250 3.500z" fill="#666"/>
<g transform="translate(968 95.5)"><path d="M2 1l5 5M7 1l-5 5" stroke="#2a78e0" stroke-width="1.700"/><path d="M7 6l6 6" stroke="#222" stroke-width="3.400"/><path d="M14 3l-3 3" stroke="#555" stroke-width="2"/><path d="M13 10q3 4-2 5.500" stroke="#222" stroke-width="1.600" fill="none"/><path d="M3 17h13v-2h-13z" fill="#333"/></g>
<path d="M992 103.5h6.500l-3.250 3.500z" fill="#666"/>
<path d="M1004.5 96.5v17" stroke="#a8aebb"/><path d="M1005.5 96.5v17" stroke="#f4f6fa"/>
<g transform="translate(1015 95.5)"><path d="M2 5l6-4l9 3v7l-6 6l-9-3.500z" fill="#3a78d0" stroke="#123a7a"/><path d="M6 7.500l5 1.500l3-2v4l-3 3l-5-2z" fill="#cfe0f8" stroke="#123a7a" stroke-width="0.700"/></g>
<path d="M1039 103.5h6.500l-3.250 3.500z" fill="#666"/>
<rect x="1055" y="96.5" width="2" height="2" fill="#9097a6"/><rect x="1056" y="97.5" width="1.500" height="1.500" fill="#f8f9fc"/>
<rect x="1055" y="100.5" width="2" height="2" fill="#9097a6"/><rect x="1056" y="101.5" width="1.500" height="1.500" fill="#f8f9fc"/>
<rect x="1055" y="104.5" width="2" height="2" fill="#9097a6"/><rect x="1056" y="105.5" width="1.500" height="1.500" fill="#f8f9fc"/>
<rect x="1055" y="108.5" width="2" height="2" fill="#9097a6"/><rect x="1056" y="109.5" width="1.500" height="1.500" fill="#f8f9fc"/>
<rect x="1055" y="112.5" width="2" height="2" fill="#9097a6"/><rect x="1056" y="113.5" width="1.500" height="1.500" fill="#f8f9fc"/>
<rect x="1063.5" y="92.0" width="23" height="23.500" rx="2.500" fill="url(#tborg)" stroke="#dca040" stroke-width="1"/>
<g transform="translate(1066 95.5)"><path d="M3 16.500l1.500-11q.5-2.500 3-2.500l5.500 .5q2 .5 2 3l-1 10" fill="none" stroke="#111" stroke-width="2"/><circle cx="3" cy="16.500" r="1.500" fill="#20b030"/><circle cx="14" cy="16.500" r="1.500" fill="#20b030"/><circle cx="5" cy="3.500" r="1.500" fill="#e81010"/><circle cx="14.500" cy="4" r="1.500" fill="#e81010"/></g>
<g transform="translate(1090 95.5)"><rect x="1" y="6" width="16.500" height="7" rx="3.500" fill="#c8ccd4" stroke="#333" stroke-width="1.200"/><rect x="1" y="6" width="9" height="3" rx="1.500" fill="#333"/><circle cx="6" cy="10.500" r="1.200" fill="#e81010"/><circle cx="9.500" cy="10.500" r="1.200" fill="#e8d020"/><circle cx="13" cy="10.500" r="1.200" fill="#2a58d8"/></g>
<path d="M1114.5 96.5v17" stroke="#a8aebb"/><path d="M1115.5 96.5v17" stroke="#f4f6fa"/>
<g transform="translate(1122 95.5)"><path d="M5.500 1h7M5.500 7.500h7M9 1v6.500" stroke="#2b3fb0" stroke-width="1.600" fill="none"/><path d="M0 17V13L9 12.5Z" fill="#2040d0"/><path d="M9 12.5L18 8.5V12Z" fill="#e02020"/><path d="M0 13L18 12" stroke="#222" stroke-width="0.9"/></g>
<g transform="translate(1147 95.5)"><path d="M1 8l6-6l11 5.500l-6 8z" fill="url(#tbrain)" stroke="#222" stroke-width="0.700"/><path d="M1 8l11 7.500v1.800l-11-7.500z" fill="#1a4fd0"/><path d="M12 15.500l6-8v1.800l-6 8z" fill="#123aa0"/></g>
<g transform="translate(1172 95.5)"><path d="M2 5l4-3.500h11v11l-4 4h-11z" fill="#4ac0a0" stroke="#667" stroke-width="0.700"/><rect x="2" y="5" width="11" height="11.500" fill="#40c8b0"/><circle cx="7.500" cy="10.500" r="4.500" fill="#e8e040"/><circle cx="7.500" cy="10.500" r="2.500" fill="#f06020"/><path d="M13 5l4-3.500v11l-4 4z" fill="#50b0d0"/><path d="M2 5l4-3.500h11l-4 3.500z" fill="#70d0c0"/></g>
<g transform="translate(1197 95.5)"><path d="M3 7q0-5.500 4-5.500q3.500 0 4 5.500z" fill="#3fae4a"/><ellipse cx="7" cy="7.500" rx="5.500" ry="2" fill="#2a8a36"/><path d="M18 3.500h-5M15.500 1l-3 2.500l3 2.500" stroke="#1f7a2c" stroke-width="1.700" fill="none"/><path d="M7 18v-6M3.500 13.500l3.500-4l3.500 4z" stroke="#1f9a2c" stroke-width="1.600" fill="#1f9a2c"/></g>
<g transform="translate(1221 95.5)"><path d="M2 12q5-9 15-9q-3 7-15 9z" fill="#b0b8cc" stroke="#8088a0" stroke-width="0.700"/><path d="M0 17V14L9 12Z" fill="#8aa0e0"/><path d="M9 12L18 8.500V11.500Z" fill="#e09090"/><path d="M0 14L18 11.500" stroke="#889" stroke-width="0.900"/></g>
<g transform="translate(1247 95.5)"><rect x="1" y="1.5" width="7" height="6" rx="1" fill="#f0e060" stroke="#6a6020" stroke-width="0.900"/><rect x="10.5" y="1.5" width="7" height="6" rx="1" fill="#f0e060" stroke="#6a6020" stroke-width="0.900"/><rect x="1" y="10.5" width="7" height="6" rx="1" fill="#f0e060" stroke="#6a6020" stroke-width="0.900"/><rect x="10.5" y="10.5" width="7" height="6" rx="1" fill="#f0e060" stroke="#6a6020" stroke-width="0.900"/><path d="M8 4.500h2.500M8 13.500h2.500" stroke="#333"/></g>
<path d="M1272 103.5h6.500l-3.250 3.500z" fill="#666"/>
<g transform="translate(1284 95.5)"><path d="M5.500 1h7M5.500 8h7M9 1v7" stroke="#8aa0d8" stroke-width="1.500" fill="none"/><path d="M0 13h18" stroke="#667" stroke-width="0.800"/><path d="M0 13q4.500 8 9 0" stroke="#2a58d8" stroke-width="1.200" fill="none"/><path d="M9 13q4.500-8 9 0" stroke="#e02020" stroke-width="1.200" fill="none"/></g>
<g transform="translate(1309 95.5)"><rect x="1" y="1" width="16.500" height="16" fill="#2a3a90" stroke="#1a2060"/><rect x="2.5" y="3" width="5.500" height="2.600" fill="#e8ecfc"/><rect x="10.5" y="3" width="5.500" height="2.600" fill="#e8ecfc"/><rect x="2.5" y="7" width="5.500" height="2.600" fill="#e8ecfc"/><rect x="10.5" y="7" width="5.500" height="2.600" fill="#e8ecfc"/><rect x="2.5" y="11" width="5.500" height="2.600" fill="#e8ecfc"/><rect x="10.5" y="11" width="5.500" height="2.600" fill="#e8ecfc"/><rect x="2.5" y="14.5" width="5.500" height="2.600" fill="#e8ecfc"/><rect x="10.5" y="14.5" width="5.500" height="2.600" fill="#e8ecfc"/><rect x="2.500" y="7" width="5.500" height="2.600" fill="#e06060"/><rect x="10.500" y="11" width="5.500" height="2.600" fill="#e06060"/></g>
<path d="M1334.5 96.5v17" stroke="#a8aebb"/><path d="M1335.5 96.5v17" stroke="#f4f6fa"/>
<g transform="translate(1343 95.5)"><rect x="2.500" y="1.500" width="13.500" height="15.500" fill="#fff" stroke="#222" stroke-width="1.300"/><rect x="2.500" y="1.500" width="13.500" height="2.500" fill="#334"/><rect x="4" y="5.0" width="4" height="2" fill="#e02020"/><rect x="4" y="7.3" width="4" height="2" fill="#f08020"/><rect x="4" y="9.6" width="4" height="2" fill="#e8e020"/><rect x="4" y="11.899999999999999" width="4" height="2" fill="#20c020"/><rect x="4" y="14.2" width="4" height="2" fill="#2060e0"/><path d="M9.500 6.500h5M9.500 9h5M9.500 11.500h5M9.500 14h5" stroke="#556" stroke-width="0.900"/></g>
<g transform="translate(1368 95.5)"><g transform="translate(0 0) scale(1)"><path d="M4.60 0.10L5.65 2.98L8.67 2.45L6.70 4.80L8.67 7.15L5.65 6.62L4.60 9.50L3.55 6.62L0.53 7.15L2.50 4.80L0.53 2.45L3.55 2.98Z" fill="#f8f23c" stroke="#b4a614" stroke-width="0.55"/></g><path d="M17 1l-4 5M13 1l5 4" stroke="#e02020" stroke-width="1.300"/><path d="M3 16l8-6l3 3l-9 5z" fill="#8aa0c8" stroke="#223" stroke-width="0.800"/><path d="M11 10l3-3l3 3l-3 3z" fill="#d0c070" stroke="#443" stroke-width="0.700"/><circle cx="3.500" cy="16" r="1.800" fill="#2a58d8"/></g>
<path d="M1393 103.5h6.500l-3.250 3.500z" fill="#666"/>
<g transform="translate(1407 95.5)"><path d="M1 1v16.500h16.500z" fill="#2a58d8"/><path d="M1 1l16.500 16.500h-4l-12.500-12.500z" fill="#e02020"/><path d="M1 5l12.500 12.500h-4l-8.500-8.500z" fill="#f0e020"/><path d="M1 9l8.500 8.500h-4l-4.500-4.500z" fill="#20c020"/><path d="M1 1v16.500h16.500" stroke="#111" stroke-width="1.400" fill="none"/><path d="M9 11l7-9l2.500 2l-7 9l-3.500 1z" fill="#f0c040" stroke="#222" stroke-width="0.900"/><path d="M16 2l2.500 2" stroke="#e02020" stroke-width="2.500"/></g>
<path d="M1433 103.5h6.500l-3.250 3.500z" fill="#666"/>
<rect x="490" y="65.500" width="225" height="20" fill="#fff"/><rect x="714.5" y="65.500" width="15" height="20" fill="#d4d8e0" stroke="#eef0f5"/>
<path d="M718.500 73h7l-3.500 4z" fill="#555"/>
<text x="494" y="80" font-size="13" fill="#1a1a1a" stroke="#1a1a1a" stroke-width="0.3" textLength="216" lengthAdjust="spacingAndGlyphs">CR8 - Enveloppe Combinaisons Newm</text>
<g transform="translate(12 40)"><rect x="0" y="0" width="18" height="15" fill="#1a1f6a"/><path d="M0 10.500h18" stroke="#fff" stroke-width="1.600"/><path d="M7 0v15" stroke="#fff" stroke-width="1.600"/><path d="M1.500 10l5.500-9.500l9 9.500" stroke="#fff" stroke-width="1.200" fill="none"/><path d="M7 .5l4 9.500M7 .5l7 9.500" stroke="#c8ccf0" stroke-width="0.600"/></g>
<rect x="5" y="40" width="2" height="2" fill="#9097a6"/><rect x="6" y="41" width="1.500" height="1.500" fill="#f8f9fc"/>
<rect x="5" y="44" width="2" height="2" fill="#9097a6"/><rect x="6" y="45" width="1.500" height="1.500" fill="#f8f9fc"/>
<rect x="5" y="48" width="2" height="2" fill="#9097a6"/><rect x="6" y="49" width="1.500" height="1.500" fill="#f8f9fc"/>
<rect x="5" y="52" width="2" height="2" fill="#9097a6"/><rect x="6" y="53" width="1.500" height="1.500" fill="#f8f9fc"/>
<rect x="5" y="56" width="2" height="2" fill="#9097a6"/><rect x="6" y="57" width="1.500" height="1.500" fill="#f8f9fc"/>
<g transform="translate(10 8)"><path d="M5 4l6-3.500l6.500 2.500v9l-6 5l-6.500-3z" fill="#9aa4b8" stroke="#4a5468" stroke-width="0.800"/><path d="M5 4l6.500 3l6-4M11.500 7v10" stroke="#4a5468" stroke-width="0.700" fill="none"/><path d="M7 5l4.500 2v3l-4.500-2zM12.500 7.500l4-3v3l-4 3z" fill="#dfe4ee" fill-opacity="0.700"/><text x="0" y="17.500" font-size="12" font-weight="bold" fill="#f0c020" stroke="#6a4a00" stroke-width="0.400">5</text></g>
</svg>
<div id="navhead"></div><div id="navtree"></div>
<svg width="246" height="1200" style="left:0;top:0">
<defs><linearGradient id="ebg" x1="0" y1="0" x2="1" y2="1"><stop offset="0" stop-color="#fff"/><stop offset="1" stop-color="#d4d4d0"/></linearGradient>
<linearGradient id="cbg" x1="0" y1="0" x2="1" y2="1"><stop offset="0" stop-color="#d8dadf"/><stop offset="1" stop-color="#fbfbfc"/></linearGradient>
<linearGradient id="rbg" x1="0" y1="0" x2="1" y2="1"><stop offset="0" stop-color="#c4c6ca"/><stop offset="0.6" stop-color="#fafafa"/><stop offset="1" stop-color="#fff"/></linearGradient>
<linearGradient id="rain" x1="0" y1="0.2" x2="1" y2="0.8"><stop offset="0" stop-color="#f00"/><stop offset="0.3" stop-color="#ff0"/><stop offset="0.55" stop-color="#0d0"/><stop offset="0.8" stop-color="#0cf"/><stop offset="1" stop-color="#04f"/></linearGradient></defs>
<text x="6" y="135" font-size="13" fill="#444" textLength="180" lengthAdjust="spacingAndGlyphs">Navigateur de projet - Résultats</text>
<path d="M208.5 126.5h4v5h-4zM207 131.5h7M210.5 131.5v4" stroke="#555" stroke-width="1" fill="none"/>
<path d="M224.5 125.5l8 8M232.5 125.5l-8 8" stroke="#555" stroke-width="1.3"/>
<path d="M17.5 160V430" stroke="#9a9a9a" stroke-width="1" stroke-dasharray="1 1"/>
<path d="M22 155.0H30" stroke="#9a9a9a" stroke-width="1" stroke-dasharray="1 1"/>
<rect x="12.5" y="150.5" width="9" height="9" rx="1" fill="url(#ebg)" stroke="#9b9b9b" stroke-width="1"/><path d="M14.5 155.0h5" stroke="#3a4f9a" stroke-width="1.4"/>
<rect x="32.0" y="147.5" width="13" height="13" fill="url(#cbg)" stroke="#6e7073" stroke-width="1.2"/><rect x="33.5" y="149.0" width="10" height="10" fill="none" stroke="#f4f4f4" stroke-width="0.8"/><path d="M34.7 154.0l2.6 3l5-6.5" fill="none" stroke="#111" stroke-width="1.9"/>
<ellipse cx="57.5" cy="154.5" rx="8.3" ry="6.2" fill="none" stroke="#9a9a9a" stroke-width="0.8"/><path d="M51.6 160.8V153.1Q51.6 149.9 54.8 149.9H60.2Q63.4 149.9 63.4 153.1V160.8" fill="none" stroke="#111" stroke-width="1.7"/><path d="M53.5 152.3Q57.5 154.3 61.5 152.3" fill="none" stroke="#888" stroke-width="0.7"/><rect x="50.8" y="159.1" width="1.8" height="2.2" fill="#f00"/><rect x="62.5" y="159.1" width="1.8" height="2.2" fill="#f00"/><rect x="51.6" y="149.1" width="2.2" height="1.8" fill="#f00"/><rect x="61.2" y="149.1" width="2.2" height="1.8" fill="#f00"/>
<text x="71" y="158.8" font-size="13" fill="#111" textLength="132" lengthAdjust="spacingAndGlyphs" stroke="#111" stroke-width="0.25">Déformations globales</text>
<path d="M22 315.0H30" stroke="#9a9a9a" stroke-width="1" stroke-dasharray="1 1"/>
<rect x="12.5" y="310.5" width="9" height="9" rx="1" fill="url(#ebg)" stroke="#9b9b9b" stroke-width="1"/><path d="M14.5 315.0h5" stroke="#3a4f9a" stroke-width="1.4"/><path d="M17 312.5v5" stroke="#3a4f9a" stroke-width="1.4"/>
<rect x="32.0" y="307.5" width="13" height="13" fill="url(#cbg)" stroke="#6e7073" stroke-width="1.2"/><rect x="33.5" y="309.0" width="10" height="10" fill="none" stroke="#f4f4f4" stroke-width="0.8"/>
<path d="M53.5 307.0h7M53.5 313.0h7M57.0 307.0v6" stroke="#2b3fb0" stroke-width="1.5" fill="none"/><path d="M48.5 321.5L48.5 317.5L57.0 317.0Z" fill="#2040d0"/><path d="M57.0 317.0L65.5 313.0L65.5 316.5Z" fill="#e02020"/><path d="M48.5 317.5L65.5 316.5" stroke="#222" stroke-width="1"/>
<text x="71" y="318.8" font-size="13" fill="#111" textLength="35" lengthAdjust="spacingAndGlyphs" stroke="#111" stroke-width="0.25">Barres</text>
<path d="M22 335.0H30" stroke="#9a9a9a" stroke-width="1" stroke-dasharray="1 1"/>
<rect x="12.5" y="330.5" width="9" height="9" rx="1" fill="url(#ebg)" stroke="#9b9b9b" stroke-width="1"/><path d="M14.5 335.0h5" stroke="#3a4f9a" stroke-width="1.4"/><path d="M17 332.5v5" stroke="#3a4f9a" stroke-width="1.4"/>
<rect x="32.0" y="327.5" width="13" height="13" fill="url(#cbg)" stroke="#6e7073" stroke-width="1.2"/><rect x="33.5" y="329.0" width="10" height="10" fill="none" stroke="#f4f4f4" stroke-width="0.8"/>
<path d="M49.5 333.5L54.5 327.5L64.5 332.5L59.5 340.5Z" fill="url(#rain)" stroke="#333" stroke-width="0.6"/><path d="M49.5 333.5L59.5 340.5L59.5 342.0L49.5 335.0Z" fill="#1a4fd0"/>
<text x="71" y="338.8" font-size="13" fill="#111" textLength="49" lengthAdjust="spacingAndGlyphs" stroke="#111" stroke-width="0.25">Surfaces</text>
<path d="M22 355.0H30" stroke="#9a9a9a" stroke-width="1" stroke-dasharray="1 1"/>
<rect x="12.5" y="350.5" width="9" height="9" rx="1" fill="url(#ebg)" stroke="#9b9b9b" stroke-width="1"/><path d="M14.5 355.0h5" stroke="#3a4f9a" stroke-width="1.4"/><path d="M17 352.5v5" stroke="#3a4f9a" stroke-width="1.4"/>
<rect x="32.0" y="347.5" width="13" height="13" fill="url(#cbg)" stroke="#6e7073" stroke-width="1.2"/><rect x="33.5" y="349.0" width="10" height="10" fill="none" stroke="#f4f4f4" stroke-width="0.8"/>
<ellipse cx="57.5" cy="354.5" rx="8.3" ry="6.2" fill="none" stroke="#9a9a9a" stroke-width="0.8"/><path d="M51.6 360.8V353.1Q51.6 349.9 54.8 349.9H60.2Q63.4 349.9 63.4 353.1V360.8" fill="none" stroke="#111" stroke-width="1.7"/><path d="M53.5 352.3Q57.5 354.3 61.5 352.3" fill="none" stroke="#888" stroke-width="0.7"/><rect x="50.8" y="359.1" width="1.8" height="2.2" fill="#f00"/><rect x="62.5" y="359.1" width="1.8" height="2.2" fill="#f00"/><rect x="51.6" y="349.1" width="2.2" height="1.8" fill="#f00"/><rect x="61.2" y="349.1" width="2.2" height="1.8" fill="#f00"/>
<text x="71" y="358.8" font-size="13" fill="#111" textLength="39" lengthAdjust="spacingAndGlyphs" stroke="#111" stroke-width="0.25">Critère</text>
<path d="M22 375.0H30" stroke="#9a9a9a" stroke-width="1" stroke-dasharray="1 1"/>
<rect x="12.5" y="370.5" width="9" height="9" rx="1" fill="url(#ebg)" stroke="#9b9b9b" stroke-width="1"/><path d="M14.5 375.0h5" stroke="#3a4f9a" stroke-width="1.4"/><path d="M17 372.5v5" stroke="#3a4f9a" stroke-width="1.4"/>
<rect x="32.0" y="367.5" width="13" height="13" fill="url(#cbg)" stroke="#6e7073" stroke-width="1.2"/><rect x="33.5" y="369.0" width="10" height="10" fill="none" stroke="#f4f4f4" stroke-width="0.8"/>
<path d="M51.5 373.0Q51.5 367.5 55.5 367.5Q58.5 367.5 59.0 373.0Z" fill="#3fae4a"/><ellipse cx="55.3" cy="373.5" rx="5.5" ry="2" fill="#2a8a36"/><path d="M65.5 369.0h-4.5M63.0 367.0l-3 2l3 2" stroke="#1f7a2c" stroke-width="1.6" fill="none"/><path d="M55.3 382.5v-5M52.3 379.0l3-3.5l3 3.5Z" stroke="#1f9a2c" stroke-width="1.6" fill="#1f9a2c"/>
<text x="71" y="378.8" font-size="13" fill="#111" textLength="104.5" lengthAdjust="spacingAndGlyphs" stroke="#111" stroke-width="0.25">Réactions d'appui</text>
<path d="M22 395.0H30" stroke="#9a9a9a" stroke-width="1" stroke-dasharray="1 1"/>
<rect x="12.5" y="390.5" width="9" height="9" rx="1" fill="url(#ebg)" stroke="#9b9b9b" stroke-width="1"/><path d="M14.5 395.0h5" stroke="#3a4f9a" stroke-width="1.4"/><path d="M17 392.5v5" stroke="#3a4f9a" stroke-width="1.4"/>
<rect x="32.0" y="387.5" width="13" height="13" fill="url(#cbg)" stroke="#6e7073" stroke-width="1.2"/><rect x="33.5" y="389.0" width="10" height="10" fill="none" stroke="#f4f4f4" stroke-width="0.8"/>
<path d="M49.5 385.5v11" stroke="#111" stroke-width="1.5"/><circle cx="54.0" cy="390.0" r="2.6" fill="#dff" stroke="#2a9a9a" stroke-width="1.3"/><path d="M57.0 390.0h8" stroke="#111" stroke-width="1.6"/><path d="M48.5 401.5L48.5 397.5L57.0 397.0Z" fill="#2040d0"/><path d="M57.0 397.0L65.5 393.0L65.5 396.5Z" fill="#e02020"/><path d="M48.5 397.5L65.5 396.5" stroke="#222" stroke-width="1"/>
<text x="71" y="398.8" font-size="13" fill="#111" textLength="64.5" lengthAdjust="spacingAndGlyphs" stroke="#111" stroke-width="0.25">Libérations</text>
<path d="M22 415.0H30" stroke="#9a9a9a" stroke-width="1" stroke-dasharray="1 1"/>
<rect x="12.5" y="410.5" width="9" height="9" rx="1" fill="url(#ebg)" stroke="#9b9b9b" stroke-width="1"/><path d="M14.5 415.0h5" stroke="#3a4f9a" stroke-width="1.4"/><path d="M17 412.5v5" stroke="#3a4f9a" stroke-width="1.4"/>
<rect x="32.0" y="407.5" width="13" height="13" fill="url(#cbg)" stroke="#6e7073" stroke-width="1.2"/><rect x="33.5" y="409.0" width="10" height="10" fill="none" stroke="#f4f4f4" stroke-width="0.8"/>
<path d="M51.0 408.0h13v9.5h-9.5l-4.5 3.5l1-3.5z" fill="#f3e36a" stroke="#9a8a20" stroke-width="1"/><text x="53.0" y="415.5" font-size="8" fill="#222">xx</text>
<text x="71" y="418.8" font-size="13" fill="#111" textLength="118" lengthAdjust="spacingAndGlyphs" stroke="#111" stroke-width="0.25">Valeurs aux surfaces</text>
<path d="M22 435.0H30" stroke="#9a9a9a" stroke-width="1" stroke-dasharray="1 1"/>
<rect x="12.5" y="430.5" width="9" height="9" rx="1" fill="url(#ebg)" stroke="#9b9b9b" stroke-width="1"/><path d="M14.5 435.0h5" stroke="#3a4f9a" stroke-width="1.4"/>
<rect x="32.0" y="427.5" width="13" height="13" fill="url(#cbg)" stroke="#6e7073" stroke-width="1.2"/><rect x="33.5" y="429.0" width="10" height="10" fill="none" stroke="#f4f4f4" stroke-width="0.8"/><rect x="35.0" y="430.5" width="7" height="7" fill="#8a8a8a"/>
<ellipse cx="57.5" cy="434.5" rx="8.3" ry="6.2" fill="none" stroke="#9a9a9a" stroke-width="0.8"/><path d="M51.6 440.8V433.1Q51.6 429.9 54.8 429.9H60.2Q63.4 429.9 63.4 433.1V440.8" fill="none" stroke="#111" stroke-width="1.7"/><path d="M53.5 432.3Q57.5 434.3 61.5 432.3" fill="none" stroke="#888" stroke-width="0.7"/><rect x="50.8" y="439.1" width="1.8" height="2.2" fill="#f00"/><rect x="62.5" y="439.1" width="1.8" height="2.2" fill="#f00"/><rect x="51.6" y="429.1" width="2.2" height="1.8" fill="#f00"/><rect x="61.2" y="429.1" width="2.2" height="1.8" fill="#f00"/>
<text x="71" y="438.8" font-size="13" fill="#111" textLength="154.5" lengthAdjust="spacingAndGlyphs" stroke="#111" stroke-width="0.25">Combinaisons de résultats</text>
<path d="M38.5 163V296.5" stroke="#9a9a9a" stroke-width="1" stroke-dasharray="1 1"/>
<path d="M39 175.0H51" stroke="#9a9a9a" stroke-width="1" stroke-dasharray="1 1"/>
<circle cx="59.5" cy="174.5" r="6.6" fill="url(#rbg)" stroke="#4a4a4a" stroke-width="1.2"/><circle cx="59.5" cy="174.5" r="2.8" fill="#111"/><circle cx="58.7" cy="173.7" r="0.9" fill="#999"/>
<ellipse cx="78.0" cy="174.5" rx="8.3" ry="6.2" fill="none" stroke="#9a9a9a" stroke-width="0.8"/><path d="M72.1 180.8V173.1Q72.1 169.9 75.3 169.9H80.7Q83.9 169.9 83.9 173.1V180.8" fill="none" stroke="#111" stroke-width="1.7"/><path d="M74.0 172.3Q78.0 174.3 82.0 172.3" fill="none" stroke="#888" stroke-width="0.7"/><rect x="71.3" y="179.1" width="1.8" height="2.2" fill="#f00"/><rect x="83.0" y="179.1" width="1.8" height="2.2" fill="#f00"/><rect x="72.1" y="169.1" width="2.2" height="1.8" fill="#f00"/><rect x="81.7" y="169.1" width="2.2" height="1.8" fill="#f00"/>
<text x="93" y="178.5" font-size="13" fill="#111" letter-spacing="0.3">u<tspan font-size="11" dy="1"></tspan></text>
<path d="M39 195.0H51" stroke="#9a9a9a" stroke-width="1" stroke-dasharray="1 1"/>
<circle cx="59.5" cy="194.5" r="6.6" fill="url(#rbg)" stroke="#4a4a4a" stroke-width="1.2"/>
<ellipse cx="78.0" cy="194.5" rx="8.3" ry="6.2" fill="none" stroke="#9a9a9a" stroke-width="0.8"/><path d="M72.1 200.8V193.1Q72.1 189.9 75.3 189.9H80.7Q83.9 189.9 83.9 193.1V200.8" fill="none" stroke="#111" stroke-width="1.7"/><path d="M74.0 192.3Q78.0 194.3 82.0 192.3" fill="none" stroke="#888" stroke-width="0.7"/><rect x="71.3" y="199.1" width="1.8" height="2.2" fill="#f00"/><rect x="83.0" y="199.1" width="1.8" height="2.2" fill="#f00"/><rect x="72.1" y="189.1" width="2.2" height="1.8" fill="#f00"/><rect x="81.7" y="189.1" width="2.2" height="1.8" fill="#f00"/>
<text x="93" y="198.5" font-size="13" fill="#111" letter-spacing="0.3">u<tspan font-size="11" dy="1">X</tspan></text>
<path d="M39 215.0H51" stroke="#9a9a9a" stroke-width="1" stroke-dasharray="1 1"/>
<circle cx="59.5" cy="214.5" r="6.6" fill="url(#rbg)" stroke="#4a4a4a" stroke-width="1.2"/>
<ellipse cx="78.0" cy="214.5" rx="8.3" ry="6.2" fill="none" stroke="#9a9a9a" stroke-width="0.8"/><path d="M72.1 220.8V213.1Q72.1 209.9 75.3 209.9H80.7Q83.9 209.9 83.9 213.1V220.8" fill="none" stroke="#111" stroke-width="1.7"/><path d="M74.0 212.3Q78.0 214.3 82.0 212.3" fill="none" stroke="#888" stroke-width="0.7"/><rect x="71.3" y="219.1" width="1.8" height="2.2" fill="#f00"/><rect x="83.0" y="219.1" width="1.8" height="2.2" fill="#f00"/><rect x="72.1" y="209.1" width="2.2" height="1.8" fill="#f00"/><rect x="81.7" y="209.1" width="2.2" height="1.8" fill="#f00"/>
<text x="93" y="218.5" font-size="13" fill="#111" letter-spacing="0.3">u<tspan font-size="11" dy="1">Y</tspan></text>
<path d="M39 235.0H51" stroke="#9a9a9a" stroke-width="1" stroke-dasharray="1 1"/>
<circle cx="59.5" cy="234.5" r="6.6" fill="url(#rbg)" stroke="#4a4a4a" stroke-width="1.2"/>
<ellipse cx="78.0" cy="234.5" rx="8.3" ry="6.2" fill="none" stroke="#9a9a9a" stroke-width="0.8"/><path d="M72.1 240.8V233.1Q72.1 229.9 75.3 229.9H80.7Q83.9 229.9 83.9 233.1V240.8" fill="none" stroke="#111" stroke-width="1.7"/><path d="M74.0 232.3Q78.0 234.3 82.0 232.3" fill="none" stroke="#888" stroke-width="0.7"/><rect x="71.3" y="239.1" width="1.8" height="2.2" fill="#f00"/><rect x="83.0" y="239.1" width="1.8" height="2.2" fill="#f00"/><rect x="72.1" y="229.1" width="2.2" height="1.8" fill="#f00"/><rect x="81.7" y="229.1" width="2.2" height="1.8" fill="#f00"/>
<text x="93" y="238.5" font-size="13" fill="#111" letter-spacing="0.3">u<tspan font-size="11" dy="1">Z</tspan></text>
<path d="M39 255.0H51" stroke="#9a9a9a" stroke-width="1" stroke-dasharray="1 1"/>
<circle cx="59.5" cy="254.5" r="6.6" fill="url(#rbg)" stroke="#4a4a4a" stroke-width="1.2"/>
<ellipse cx="78.0" cy="254.5" rx="8.3" ry="6.2" fill="none" stroke="#9a9a9a" stroke-width="0.8"/><path d="M72.1 260.8V253.1Q72.1 249.9 75.3 249.9H80.7Q83.9 249.9 83.9 253.1V260.8" fill="none" stroke="#111" stroke-width="1.7"/><path d="M74.0 252.3Q78.0 254.3 82.0 252.3" fill="none" stroke="#888" stroke-width="0.7"/><rect x="71.3" y="259.1" width="1.8" height="2.2" fill="#f00"/><rect x="83.0" y="259.1" width="1.8" height="2.2" fill="#f00"/><rect x="72.1" y="249.1" width="2.2" height="1.8" fill="#f00"/><rect x="81.7" y="249.1" width="2.2" height="1.8" fill="#f00"/>
<text x="93" y="258.5" font-size="13" fill="#111" letter-spacing="0.3">φ<tspan font-size="11" dy="1">X</tspan></text>
<path d="M39 275.0H51" stroke="#9a9a9a" stroke-width="1" stroke-dasharray="1 1"/>
<circle cx="59.5" cy="274.5" r="6.6" fill="url(#rbg)" stroke="#4a4a4a" stroke-width="1.2"/>
<ellipse cx="78.0" cy="274.5" rx="8.3" ry="6.2" fill="none" stroke="#9a9a9a" stroke-width="0.8"/><path d="M72.1 280.8V273.1Q72.1 269.9 75.3 269.9H80.7Q83.9 269.9 83.9 273.1V280.8" fill="none" stroke="#111" stroke-width="1.7"/><path d="M74.0 272.3Q78.0 274.3 82.0 272.3" fill="none" stroke="#888" stroke-width="0.7"/><rect x="71.3" y="279.1" width="1.8" height="2.2" fill="#f00"/><rect x="83.0" y="279.1" width="1.8" height="2.2" fill="#f00"/><rect x="72.1" y="269.1" width="2.2" height="1.8" fill="#f00"/><rect x="81.7" y="269.1" width="2.2" height="1.8" fill="#f00"/>
<text x="93" y="278.5" font-size="13" fill="#111" letter-spacing="0.3">φ<tspan font-size="11" dy="1">Y</tspan></text>
<path d="M39 295.0H51" stroke="#9a9a9a" stroke-width="1" stroke-dasharray="1 1"/>
<circle cx="59.5" cy="294.5" r="6.6" fill="url(#rbg)" stroke="#4a4a4a" stroke-width="1.2"/>
<ellipse cx="78.0" cy="294.5" rx="8.3" ry="6.2" fill="none" stroke="#9a9a9a" stroke-width="0.8"/><path d="M72.1 300.8V293.1Q72.1 289.9 75.3 289.9H80.7Q83.9 289.9 83.9 293.1V300.8" fill="none" stroke="#111" stroke-width="1.7"/><path d="M74.0 292.3Q78.0 294.3 82.0 292.3" fill="none" stroke="#888" stroke-width="0.7"/><rect x="71.3" y="299.1" width="1.8" height="2.2" fill="#f00"/><rect x="83.0" y="299.1" width="1.8" height="2.2" fill="#f00"/><rect x="72.1" y="289.1" width="2.2" height="1.8" fill="#f00"/><rect x="81.7" y="289.1" width="2.2" height="1.8" fill="#f00"/>
<text x="93" y="298.5" font-size="13" fill="#111" letter-spacing="0.3">φ<tspan font-size="11" dy="1">Z</tspan></text>
<path d="M38.5 443V496.5" stroke="#9a9a9a" stroke-width="1" stroke-dasharray="1 1"/>
<path d="M39 455.0H51" stroke="#9a9a9a" stroke-width="1" stroke-dasharray="1 1"/>
<circle cx="59.5" cy="454.5" r="6.6" fill="url(#rbg)" stroke="#4a4a4a" stroke-width="1.2"/>
<ellipse cx="78.0" cy="454.5" rx="8.3" ry="6.2" fill="none" stroke="#9a9a9a" stroke-width="0.8"/><path d="M72.1 460.8V453.1Q72.1 449.9 75.3 449.9H80.7Q83.9 449.9 83.9 453.1V460.8" fill="none" stroke="#111" stroke-width="1.7"/><path d="M74.0 452.3Q78.0 454.3 82.0 452.3" fill="none" stroke="#888" stroke-width="0.7"/><rect x="71.3" y="459.1" width="1.8" height="2.2" fill="#f00"/><rect x="83.0" y="459.1" width="1.8" height="2.2" fill="#f00"/><rect x="72.1" y="449.1" width="2.2" height="1.8" fill="#f00"/><rect x="81.7" y="449.1" width="2.2" height="1.8" fill="#f00"/>
<text x="92" y="458.8" font-size="13" fill="#111" textLength="74.5" lengthAdjust="spacingAndGlyphs" stroke="#111" stroke-width="0.25">Valeurs max.</text>
<path d="M39 475.0H51" stroke="#9a9a9a" stroke-width="1" stroke-dasharray="1 1"/>
<circle cx="59.5" cy="474.5" r="6.6" fill="url(#rbg)" stroke="#4a4a4a" stroke-width="1.2"/><circle cx="59.5" cy="474.5" r="2.8" fill="#111"/><circle cx="58.7" cy="473.7" r="0.9" fill="#999"/>
<ellipse cx="78.0" cy="474.5" rx="8.3" ry="6.2" fill="none" stroke="#9a9a9a" stroke-width="0.8"/><path d="M72.1 480.8V473.1Q72.1 469.9 75.3 469.9H80.7Q83.9 469.9 83.9 473.1V480.8" fill="none" stroke="#111" stroke-width="1.7"/><path d="M74.0 472.3Q78.0 474.3 82.0 472.3" fill="none" stroke="#888" stroke-width="0.7"/><rect x="71.3" y="479.1" width="1.8" height="2.2" fill="#f00"/><rect x="83.0" y="479.1" width="1.8" height="2.2" fill="#f00"/><rect x="72.1" y="469.1" width="2.2" height="1.8" fill="#f00"/><rect x="81.7" y="469.1" width="2.2" height="1.8" fill="#f00"/>
<text x="92" y="478.8" font-size="13" fill="#111" textLength="68.5" lengthAdjust="spacingAndGlyphs" stroke="#111" stroke-width="0.25">Valeurs min</text>
<path d="M39 495.0H51" stroke="#9a9a9a" stroke-width="1" stroke-dasharray="1 1"/>
<circle cx="59.5" cy="494.5" r="6.6" fill="url(#rbg)" stroke="#4a4a4a" stroke-width="1.2"/>
<ellipse cx="78.0" cy="494.5" rx="8.3" ry="6.2" fill="none" stroke="#9a9a9a" stroke-width="0.8"/><path d="M72.1 500.8V493.1Q72.1 489.9 75.3 489.9H80.7Q83.9 489.9 83.9 493.1V500.8" fill="none" stroke="#111" stroke-width="1.7"/><path d="M74.0 492.3Q78.0 494.3 82.0 492.3" fill="none" stroke="#888" stroke-width="0.7"/><rect x="71.3" y="499.1" width="1.8" height="2.2" fill="#f00"/><rect x="83.0" y="499.1" width="1.8" height="2.2" fill="#f00"/><rect x="72.1" y="489.1" width="2.2" height="1.8" fill="#f00"/><rect x="81.7" y="489.1" width="2.2" height="1.8" fill="#f00"/>
<text x="92" y="498.8" font-size="13" fill="#111" textLength="112" lengthAdjust="spacingAndGlyphs" stroke="#111" stroke-width="0.25">Valeurs max et min</text>
</svg>
<div id="viewport">
<svg width="1600" height="1200" style="left:-247px;top:-122px">
<defs><linearGradient id="g1" gradientUnits="userSpaceOnUse" x1="384" y1="416" x2="384" y2="514"><stop offset="0.000" stop-color="#00a0ff"/><stop offset="0.143" stop-color="#00f0f0"/><stop offset="0.347" stop-color="#00ff00"/><stop offset="0.480" stop-color="#ffff00"/><stop offset="0.653" stop-color="#e8c800"/><stop offset="0.776" stop-color="#ffb000"/><stop offset="1.000" stop-color="#ff9000"/></linearGradient><linearGradient id="g2" gradientUnits="userSpaceOnUse" x1="372" y1="520" x2="372" y2="578"><stop offset="0.000" stop-color="#b0ff00"/><stop offset="0.155" stop-color="#b0ff00"/><stop offset="0.431" stop-color="#00ff00"/><stop offset="0.655" stop-color="#00f0f0"/><stop offset="0.862" stop-color="#0000ff"/><stop offset="1.000" stop-color="#00009c"/></linearGradient><linearGradient id="g3" gradientUnits="userSpaceOnUse" x1="404.75" y1="423" x2="404.75" y2="497"><stop offset="0.000" stop-color="#ffff00"/><stop offset="0.230" stop-color="#e8c800"/><stop offset="0.432" stop-color="#ff9000"/><stop offset="0.635" stop-color="#ff5000"/><stop offset="0.838" stop-color="#ff5000"/><stop offset="1.000" stop-color="#ff9000"/></linearGradient><linearGradient id="g4" gradientUnits="userSpaceOnUse" x1="323" y1="507" x2="506" y2="437.75"><stop offset="0.000" stop-color="#ff9000"/><stop offset="0.150" stop-color="#ff9000"/><stop offset="0.310" stop-color="#ff6000"/><stop offset="0.420" stop-color="#ff5800"/><stop offset="0.580" stop-color="#ff7800"/><stop offset="0.800" stop-color="#ff9000"/><stop offset="1.000" stop-color="#ffa000"/></linearGradient><linearGradient id="g5" gradientUnits="userSpaceOnUse" x1="481" y1="437" x2="481" y2="507"><stop offset="0.000" stop-color="#00a0ff"/><stop offset="0.257" stop-color="#00f0f0"/><stop offset="0.614" stop-color="#00ff80"/><stop offset="1.000" stop-color="#00ff00"/></linearGradient><linearGradient id="g6" gradientUnits="userSpaceOnUse" x1="474.5" y1="535" x2="474.5" y2="591"><stop offset="0.000" stop-color="#00ff80"/><stop offset="0.161" stop-color="#00ff80"/><stop offset="0.446" stop-color="#00f0f0"/><stop offset="0.768" stop-color="#0000ff"/><stop offset="1.000" stop-color="#00009c"/></linearGradient><linearGradient id="g7" gradientUnits="userSpaceOnUse" x1="512" y1="442" x2="512" y2="509"><stop offset="0.000" stop-color="#ffb000"/><stop offset="0.239" stop-color="#ffff00"/><stop offset="0.493" stop-color="#00ff00"/><stop offset="0.716" stop-color="#00f0f0"/><stop offset="0.910" stop-color="#0000ff"/><stop offset="1.000" stop-color="#00009c"/></linearGradient><linearGradient id="g8" gradientUnits="userSpaceOnUse" x1="407" y1="530" x2="407" y2="561"><stop offset="0.000" stop-color="#00f0f0"/><stop offset="0.258" stop-color="#00f0f0"/><stop offset="0.645" stop-color="#0000ff"/><stop offset="1.000" stop-color="#00009c"/></linearGradient><linearGradient id="g9" gradientUnits="userSpaceOnUse" x1="617" y1="450" x2="617" y2="520"><stop offset="0.000" stop-color="#00e090"/><stop offset="0.214" stop-color="#00e8b0"/><stop offset="0.386" stop-color="#00f0f0"/><stop offset="0.571" stop-color="#0090ff"/><stop offset="0.786" stop-color="#0000ff"/><stop offset="1.000" stop-color="#00009c"/></linearGradient><linearGradient id="g10" gradientUnits="userSpaceOnUse" x1="987.5" y1="500" x2="987.5" y2="577"><stop offset="0.000" stop-color="#0000d0"/><stop offset="0.519" stop-color="#0000ff"/><stop offset="1.000" stop-color="#0080ff"/></linearGradient><linearGradient id="g11" gradientUnits="userSpaceOnUse" x1="984" y1="604" x2="984" y2="667"><stop offset="0.000" stop-color="#0000ff"/><stop offset="0.127" stop-color="#0000ff"/><stop offset="0.571" stop-color="#0000d0"/><stop offset="1.000" stop-color="#00009c"/></linearGradient><linearGradient id="g12" gradientUnits="userSpaceOnUse" x1="1083" y1="524" x2="1083" y2="592"><stop offset="0.000" stop-color="#0090ff"/><stop offset="0.309" stop-color="#00e0f0"/><stop offset="1.000" stop-color="#00f0a0"/></linearGradient><linearGradient id="g13" gradientUnits="userSpaceOnUse" x1="1078" y1="620" x2="1078" y2="681"><stop offset="0.000" stop-color="#00f0f0"/><stop offset="0.148" stop-color="#00f0f0"/><stop offset="0.492" stop-color="#0000ff"/><stop offset="1.000" stop-color="#00009c"/></linearGradient><linearGradient id="g14" gradientUnits="userSpaceOnUse" x1="1123" y1="532" x2="1123" y2="601"><stop offset="0.000" stop-color="#00d0ff"/><stop offset="0.333" stop-color="#0090ff"/><stop offset="0.623" stop-color="#0000ff"/><stop offset="1.000" stop-color="#00009c"/></linearGradient><linearGradient id="g15" gradientUnits="userSpaceOnUse" x1="1180" y1="539" x2="1180" y2="607"><stop offset="0.000" stop-color="#0090ff"/><stop offset="0.235" stop-color="#00f0f0"/><stop offset="1.000" stop-color="#00f090"/></linearGradient><linearGradient id="g16" gradientUnits="userSpaceOnUse" x1="1175" y1="634" x2="1175" y2="696"><stop offset="0.000" stop-color="#00f0f0"/><stop offset="0.161" stop-color="#00f0f0"/><stop offset="0.500" stop-color="#0040ff"/><stop offset="1.000" stop-color="#00009c"/></linearGradient><linearGradient id="g17" gradientUnits="userSpaceOnUse" x1="1227" y1="540" x2="1227" y2="616"><stop offset="0.000" stop-color="#0000e8"/><stop offset="1.000" stop-color="#0000d0"/></linearGradient><linearGradient id="g18" gradientUnits="userSpaceOnUse" x1="1276.5" y1="552" x2="1276.5" y2="621"><stop offset="0.000" stop-color="#00a0ff"/><stop offset="0.333" stop-color="#00f0f0"/><stop offset="1.000" stop-color="#00f0a0"/></linearGradient><linearGradient id="g19" gradientUnits="userSpaceOnUse" x1="1271" y1="648" x2="1271" y2="710"><stop offset="0.000" stop-color="#00f0f0"/><stop offset="0.145" stop-color="#00f0f0"/><stop offset="0.516" stop-color="#0000ff"/><stop offset="1.000" stop-color="#00009c"/></linearGradient><linearGradient id="g20" gradientUnits="userSpaceOnUse" x1="1305" y1="550" x2="1305" y2="624"><stop offset="0.000" stop-color="#a80000"/><stop offset="0.324" stop-color="#b80000"/><stop offset="0.432" stop-color="#e81000"/><stop offset="0.554" stop-color="#ff4000"/><stop offset="0.635" stop-color="#ff9000"/><stop offset="0.716" stop-color="#ffff00"/><stop offset="0.797" stop-color="#00ff00"/><stop offset="0.892" stop-color="#00f0f0"/><stop offset="1.000" stop-color="#0090ff"/></linearGradient><linearGradient id="g21" gradientUnits="userSpaceOnUse" x1="1375" y1="544" x2="1415" y2="536.5"><stop offset="0.000" stop-color="#ffff00"/><stop offset="0.700" stop-color="#ffff00"/><stop offset="1.000" stop-color="#b0ff00"/></linearGradient><linearGradient id="g22" gradientUnits="userSpaceOnUse" x1="1410" y1="534" x2="1508" y2="577"><stop offset="0.000" stop-color="#b0ff00"/><stop offset="0.100" stop-color="#60ff00"/><stop offset="0.250" stop-color="#00ff00"/><stop offset="0.420" stop-color="#00e890"/><stop offset="0.620" stop-color="#00f0f0"/><stop offset="0.820" stop-color="#0090ff"/><stop offset="1.000" stop-color="#0000ff"/></linearGradient><linearGradient id="g23" gradientUnits="userSpaceOnUse" x1="1411" y1="520" x2="1411" y2="613"><stop offset="0.000" stop-color="#d8ff00"/><stop offset="0.538" stop-color="#c0ff00"/><stop offset="0.731" stop-color="#00ff00"/><stop offset="0.892" stop-color="#00f0f0"/><stop offset="1.000" stop-color="#0090ff"/></linearGradient><linearGradient id="g24" gradientUnits="userSpaceOnUse" x1="1425" y1="500" x2="1425" y2="702"><stop offset="0.000" stop-color="#0090ff"/><stop offset="0.149" stop-color="#0080ff"/><stop offset="0.297" stop-color="#0040ff"/><stop offset="0.495" stop-color="#0000ff"/><stop offset="0.743" stop-color="#0000d0"/><stop offset="1.000" stop-color="#00009c"/></linearGradient><linearGradient id="g25" gradientUnits="userSpaceOnUse" x1="324" y1="517" x2="751.4260259720899" y2="1099.9194195152359"><stop offset="0.000" stop-color="#ff8c00"/><stop offset="0.042" stop-color="#ff9800"/><stop offset="0.071" stop-color="#ffb800"/><stop offset="0.100" stop-color="#ffff00"/><stop offset="0.127" stop-color="#80ff00"/><stop offset="0.151" stop-color="#00ff00"/><stop offset="0.176" stop-color="#00ff80"/><stop offset="0.199" stop-color="#00f0f0"/><stop offset="0.217" stop-color="#0080ff"/><stop offset="0.236" stop-color="#0000ff"/><stop offset="0.283" stop-color="#0000d8"/><stop offset="0.510" stop-color="#0000e0"/><stop offset="0.547" stop-color="#0040ff"/><stop offset="0.584" stop-color="#0090ff"/><stop offset="0.627" stop-color="#00e0f0"/><stop offset="0.676" stop-color="#00f0b0"/><stop offset="0.740" stop-color="#00ff40"/><stop offset="0.790" stop-color="#00ff00"/><stop offset="0.839" stop-color="#00ff20"/><stop offset="0.897" stop-color="#00f0a0"/><stop offset="0.936" stop-color="#00f0e0"/><stop offset="0.970" stop-color="#00e0ff"/><stop offset="1.000" stop-color="#00a0ff"/></linearGradient><linearGradient id="g26" gradientUnits="userSpaceOnUse" x1="700" y1="529" x2="694.6" y2="565"><stop offset="0" stop-color="#0020ff" stop-opacity="0.85"/><stop offset="0.4" stop-color="#0000e0" stop-opacity="0.3"/><stop offset="1" stop-color="#0000a8" stop-opacity="0.85"/></linearGradient><linearGradient id="hfade" gradientUnits="userSpaceOnUse" x1="560" y1="0" x2="930" y2="0"><stop offset="0" stop-color="#000"/><stop offset="0.12" stop-color="#fff"/><stop offset="0.6" stop-color="#fff"/><stop offset="1" stop-color="#000"/></linearGradient><mask id="mfade" maskUnits="userSpaceOnUse" x="550" y="480" width="400" height="150"><rect x="550" y="480" width="400" height="150" fill="url(#hfade)"/></mask><linearGradient id="g27" gradientUnits="userSpaceOnUse" x1="343" y1="411" x2="343" y2="590"><stop offset="0.000" stop-color="#0010ff"/><stop offset="0.078" stop-color="#0000ff"/><stop offset="0.123" stop-color="#0090ff"/><stop offset="0.207" stop-color="#00f0f0"/><stop offset="0.318" stop-color="#00ff00"/><stop offset="0.385" stop-color="#ffff00"/><stop offset="0.475" stop-color="#ffc800"/><stop offset="0.564" stop-color="#ff9000"/><stop offset="0.637" stop-color="#ff9000"/><stop offset="0.721" stop-color="#ffff00"/><stop offset="0.804" stop-color="#00ff00"/><stop offset="0.888" stop-color="#00f0f0"/><stop offset="0.961" stop-color="#0000ff"/><stop offset="1.000" stop-color="#00009c"/></linearGradient><linearGradient id="g28" gradientUnits="userSpaceOnUse" x1="395" y1="419" x2="395" y2="598"><stop offset="0.000" stop-color="#0000ff"/><stop offset="0.106" stop-color="#0000ff"/><stop offset="0.151" stop-color="#0090ff"/><stop offset="0.212" stop-color="#00f0f0"/><stop offset="0.330" stop-color="#00ff00"/><stop offset="0.419" stop-color="#ffff00"/><stop offset="0.542" stop-color="#ffe000"/><stop offset="0.676" stop-color="#ffff00"/><stop offset="0.765" stop-color="#00ff00"/><stop offset="0.844" stop-color="#00f0f0"/><stop offset="0.927" stop-color="#0000ff"/><stop offset="1.000" stop-color="#00009c"/></linearGradient><linearGradient id="g29" gradientUnits="userSpaceOnUse" x1="579" y1="455" x2="579" y2="525"><stop offset="0.000" stop-color="#0000ff"/><stop offset="0.286" stop-color="#0090ff"/><stop offset="0.786" stop-color="#00f0f0"/><stop offset="1.000" stop-color="#00f0f0"/></linearGradient><linearGradient id="g30" gradientUnits="userSpaceOnUse" x1="580.5" y1="540" x2="632.5" y2="459"><stop offset="0.000" stop-color="#0030ff"/><stop offset="0.250" stop-color="#0000ff"/><stop offset="1.000" stop-color="#0000d0"/></linearGradient><linearGradient id="g31" gradientUnits="userSpaceOnUse" x1="580.5" y1="540" x2="639.5" y2="631"><stop offset="0.000" stop-color="#0030ff"/><stop offset="0.250" stop-color="#0000ff"/><stop offset="0.600" stop-color="#0000d0"/><stop offset="1.000" stop-color="#00009c"/></linearGradient><linearGradient id="g32" gradientUnits="userSpaceOnUse" x1="582.6" y1="447" x2="582.6" y2="626"><stop offset="0.000" stop-color="#0000e0"/><stop offset="0.212" stop-color="#0000ff"/><stop offset="0.352" stop-color="#0040ff"/><stop offset="0.464" stop-color="#0090ff"/><stop offset="0.547" stop-color="#00a0ff"/><stop offset="0.642" stop-color="#0030ff"/><stop offset="0.771" stop-color="#0000ff"/><stop offset="0.883" stop-color="#0000d0"/><stop offset="1.000" stop-color="#00009c"/></linearGradient><linearGradient id="g33" gradientUnits="userSpaceOnUse" x1="636.7" y1="456" x2="636.7" y2="633"><stop offset="0.000" stop-color="#0000d0"/><stop offset="0.588" stop-color="#0000d0"/><stop offset="1.000" stop-color="#00009c"/></linearGradient><linearGradient id="g34" gradientUnits="userSpaceOnUse" x1="720" y1="470" x2="720" y2="647"><stop offset="0.000" stop-color="#0000d0"/><stop offset="0.774" stop-color="#0000d0"/><stop offset="1.000" stop-color="#00009c"/></linearGradient><linearGradient id="g35" gradientUnits="userSpaceOnUse" x1="791" y1="480" x2="791" y2="657"><stop offset="0.000" stop-color="#0000d0"/><stop offset="0.774" stop-color="#0000d0"/><stop offset="1.000" stop-color="#00009c"/></linearGradient><linearGradient id="g36" gradientUnits="userSpaceOnUse" x1="850" y1="490" x2="850" y2="666"><stop offset="0.000" stop-color="#0000d0"/><stop offset="0.773" stop-color="#0000d0"/><stop offset="1.000" stop-color="#00009c"/></linearGradient><linearGradient id="g37" gradientUnits="userSpaceOnUse" x1="946" y1="502" x2="946" y2="680"><stop offset="0.000" stop-color="#0000ff"/><stop offset="0.225" stop-color="#0060ff"/><stop offset="0.494" stop-color="#00f0f0"/><stop offset="0.719" stop-color="#0090ff"/><stop offset="0.860" stop-color="#0000ff"/><stop offset="1.000" stop-color="#00009c"/></linearGradient><linearGradient id="g38" gradientUnits="userSpaceOnUse" x1="1042" y1="518" x2="1042" y2="695"><stop offset="0.000" stop-color="#0000ff"/><stop offset="0.153" stop-color="#0090ff"/><stop offset="0.266" stop-color="#00f0f0"/><stop offset="0.463" stop-color="#00f080"/><stop offset="0.605" stop-color="#00f0a0"/><stop offset="0.746" stop-color="#00f0f0"/><stop offset="0.870" stop-color="#0000ff"/><stop offset="1.000" stop-color="#00009c"/></linearGradient><linearGradient id="g39" gradientUnits="userSpaceOnUse" x1="1139" y1="532" x2="1139" y2="709"><stop offset="0.000" stop-color="#0020ff"/><stop offset="0.102" stop-color="#0090ff"/><stop offset="0.215" stop-color="#00f0f0"/><stop offset="0.384" stop-color="#00ff40"/><stop offset="0.610" stop-color="#00f080"/><stop offset="0.751" stop-color="#00f0f0"/><stop offset="0.893" stop-color="#0000ff"/><stop offset="1.000" stop-color="#00009c"/></linearGradient><linearGradient id="g40" gradientUnits="userSpaceOnUse" x1="1240" y1="547" x2="1240" y2="723"><stop offset="0.000" stop-color="#0060ff"/><stop offset="0.102" stop-color="#0090ff"/><stop offset="0.216" stop-color="#00f0f0"/><stop offset="0.392" stop-color="#00f080"/><stop offset="0.597" stop-color="#00f0a0"/><stop offset="0.727" stop-color="#00f0f0"/><stop offset="0.869" stop-color="#0000ff"/><stop offset="1.000" stop-color="#00009c"/></linearGradient><linearGradient id="g41" gradientUnits="userSpaceOnUse" x1="1329.7" y1="555" x2="1329.7" y2="737"><stop offset="0.000" stop-color="#00a0ff"/><stop offset="0.247" stop-color="#00b0ff"/><stop offset="0.495" stop-color="#00d8ff"/><stop offset="0.742" stop-color="#0060ff"/><stop offset="0.879" stop-color="#0000ff"/><stop offset="1.000" stop-color="#00009c"/></linearGradient><linearGradient id="g42" gradientUnits="userSpaceOnUse" x1="1513" y1="577" x2="1340" y2="648"><stop offset="0.000" stop-color="#0000f0"/><stop offset="0.500" stop-color="#0000f8"/><stop offset="0.640" stop-color="#0040ff"/><stop offset="0.800" stop-color="#00a0ff"/><stop offset="1.000" stop-color="#00d0ff"/></linearGradient><linearGradient id="g43" gradientUnits="userSpaceOnUse" x1="1372.8" y1="540" x2="1372.8" y2="726"><stop offset="0.000" stop-color="#00a0ff"/><stop offset="0.323" stop-color="#0090ff"/><stop offset="0.538" stop-color="#0060ff"/><stop offset="0.753" stop-color="#0010ff"/><stop offset="1.000" stop-color="#00009c"/></linearGradient><linearGradient id="g44" gradientUnits="userSpaceOnUse" x1="1376" y1="538" x2="1427.5" y2="613"><stop offset="0.000" stop-color="#00a0ff"/><stop offset="0.500" stop-color="#0060ff"/><stop offset="1.000" stop-color="#0000ff"/></linearGradient><linearGradient id="g45" gradientUnits="userSpaceOnUse" x1="1426" y1="617.5" x2="1383" y2="724"><stop offset="0.000" stop-color="#0000ff"/><stop offset="0.500" stop-color="#0000d0"/><stop offset="1.000" stop-color="#00009c"/></linearGradient><linearGradient id="g46" gradientUnits="userSpaceOnUse" x1="1515" y1="439" x2="1515" y2="661"><stop offset="0.000" stop-color="#0080ff"/><stop offset="0.198" stop-color="#00a0ff"/><stop offset="0.387" stop-color="#00a0ff"/><stop offset="0.500" stop-color="#0060ff"/><stop offset="0.590" stop-color="#0020ff"/><stop offset="0.644" stop-color="#0000ff"/><stop offset="0.815" stop-color="#0000d0"/><stop offset="0.973" stop-color="#00009c"/><stop offset="1.000" stop-color="#00009c"/></linearGradient><linearGradient id="g47" gradientUnits="userSpaceOnUse" x1="340" y1="0" x2="700" y2="0"><stop offset="0.000" stop-color="#0000f0"/><stop offset="0.300" stop-color="#0000e8"/><stop offset="0.610" stop-color="#0000d8"/><stop offset="0.830" stop-color="#0000c4"/><stop offset="1.000" stop-color="#0000b4"/></linearGradient><linearGradient id="g48" gradientUnits="userSpaceOnUse" x1="850" y1="340" x2="1450.021" y2="559.816"><stop offset="0.000" stop-color="#00009c"/><stop offset="0.150" stop-color="#00009c"/><stop offset="0.270" stop-color="#0000a4"/><stop offset="0.318" stop-color="#0000ac"/><stop offset="0.427" stop-color="#0000c8"/><stop offset="0.500" stop-color="#0000e0"/><stop offset="0.573" stop-color="#0000f4"/><stop offset="0.650" stop-color="#0008ff"/><stop offset="0.736" stop-color="#0030ff"/><stop offset="0.820" stop-color="#0060ff"/><stop offset="0.889" stop-color="#0080ff"/><stop offset="1.000" stop-color="#00a8ff"/></linearGradient><linearGradient id="g49" gradientUnits="userSpaceOnUse" x1="1037" y1="0" x2="1334" y2="0"><stop offset="0.000" stop-color="#0000c4"/><stop offset="0.200" stop-color="#0000e4"/><stop offset="0.400" stop-color="#0010ff"/><stop offset="0.630" stop-color="#0050ff"/><stop offset="0.820" stop-color="#0090ff"/><stop offset="1.000" stop-color="#00a4ff"/></linearGradient><linearGradient id="g50" gradientUnits="userSpaceOnUse" x1="900" y1="0" x2="1110" y2="0"><stop offset="0" stop-color="#00009c"/><stop offset="0.5" stop-color="#00009c" stop-opacity="0.75"/><stop offset="1" stop-color="#00009c" stop-opacity="0"/></linearGradient><linearGradient id="g51" gradientUnits="userSpaceOnUse" x1="687" y1="0" x2="1037" y2="0"><stop offset="0.000" stop-color="#0000b4"/><stop offset="0.500" stop-color="#0000ac"/><stop offset="1.000" stop-color="#0000c0"/></linearGradient><linearGradient id="g52" gradientUnits="userSpaceOnUse" x1="520" y1="0" x2="830" y2="0"><stop offset="0.000" stop-color="#0000f0"/><stop offset="1.000" stop-color="#0000c0"/></linearGradient><linearGradient id="g53" gradientUnits="userSpaceOnUse" x1="1036" y1="0" x2="1520" y2="0"><stop offset="0.000" stop-color="#0000c0"/><stop offset="0.350" stop-color="#0000f0"/><stop offset="0.650" stop-color="#0030ff"/><stop offset="1.000" stop-color="#0090ff"/></linearGradient></defs>
<polygon points="683.0,440.0 684.0,621.0 897.0,652.0 982.0,615.0 1037.0,600.0 1037.0,380.0 824.0,362.0" fill="#00009c" />
<path d="M384.0 416.0C383.7 418.3 383.2 424.3 382.0 430.0C380.8 435.7 378.4 444.5 377.0 450.0C375.6 455.5 374.5 458.0 373.5 463.0C372.5 468.0 371.8 475.2 371.2 480.0C370.7 484.8 370.1 486.3 370.0 492.0C369.9 497.7 370.4 510.3 370.5 514.0" fill="none" stroke="url(#g1)" stroke-width="9.5" stroke-linecap="butt"/>
<path d="M372.0 520.0C372.2 521.5 371.5 523.2 373.0 529.0C374.5 534.8 377.5 546.8 381.0 555.0C384.5 563.2 391.8 574.2 394.0 578.0" fill="none" stroke="url(#g2)" stroke-width="8" stroke-linecap="butt"/>
<path d="M404.8 423.0C404.4 425.8 403.5 434.7 402.8 440.0C402.0 445.3 400.8 450.0 400.0 455.0C399.2 460.0 398.2 465.0 398.0 470.0C397.8 475.0 398.1 480.5 398.5 485.0C398.9 489.5 400.2 495.0 400.5 497.0" fill="none" stroke="url(#g3)" stroke-width="8.5" stroke-linecap="butt"/>
<path d="M323.0 507.0L506.0 437.8" fill="none" stroke="url(#g4)" stroke-width="10.8"/>
<path d="M481.0 437.5C479.8 443.8 475.6 463.4 474.0 475.0C472.4 486.6 472.0 501.7 471.6 507.0" fill="none" stroke="url(#g5)" stroke-width="9" stroke-linecap="butt"/>
<path d="M474.5 535.0C474.8 536.5 474.8 538.2 476.0 544.0C477.2 549.8 479.8 562.2 482.0 570.0C484.2 577.8 488.2 587.5 489.4 591.0" fill="none" stroke="url(#g6)" stroke-width="9" stroke-linecap="butt"/>
<path d="M512.0 442.0C512.6 446.8 513.9 462.7 515.6 471.0C517.3 479.3 519.5 485.7 522.0 492.0C524.5 498.3 529.2 506.0 530.6 508.8" fill="none" stroke="url(#g7)" stroke-width="9" stroke-linecap="butt"/>
<path d="M407.0 530.0C407.9 531.5 409.1 533.6 412.5 538.8C415.9 543.9 425.0 557.3 427.5 561.0" fill="none" stroke="url(#g8)" stroke-width="8" stroke-linecap="butt"/>
<path d="M617.0 450.0C617.4 453.3 618.3 462.5 619.5 470.0C620.7 477.5 622.6 486.7 624.0 495.0C625.4 503.3 627.3 515.8 628.0 520.0" fill="none" stroke="url(#g9)" stroke-width="8.5" stroke-linecap="butt"/>
<path d="M987.5 500.0L986.0 577.0" fill="none" stroke="url(#g10)" stroke-width="9" stroke-linecap="butt"/>
<path d="M984.0 604.0C984.2 605.3 983.3 601.5 985.0 612.0C986.7 622.5 992.5 657.8 994.0 667.0" fill="none" stroke="url(#g11)" stroke-width="9" stroke-linecap="butt"/>
<path d="M1083.0 524.0C1082.3 530.0 1080.0 548.7 1079.0 560.0C1078.0 571.3 1077.3 586.7 1077.0 592.0" fill="none" stroke="url(#g12)" stroke-width="9" stroke-linecap="butt"/>
<path d="M1078.0 620.0C1078.2 621.5 1078.0 623.2 1079.0 629.0C1080.0 634.8 1081.8 646.3 1084.0 655.0C1086.2 663.7 1090.7 676.7 1092.0 681.0" fill="none" stroke="url(#g13)" stroke-width="9" stroke-linecap="butt"/>
<path d="M1123.0 532.0C1123.8 537.5 1125.3 553.5 1128.0 565.0C1130.7 576.5 1137.2 595.0 1139.0 601.0" fill="none" stroke="url(#g14)" stroke-width="9" stroke-linecap="butt"/>
<path d="M1180.0 539.0C1179.2 545.0 1176.4 563.7 1175.0 575.0C1173.6 586.3 1172.2 601.7 1171.6 607.0" fill="none" stroke="url(#g15)" stroke-width="9" stroke-linecap="butt"/>
<path d="M1175.0 634.0C1175.2 635.7 1175.0 638.0 1176.0 644.0C1177.0 650.0 1178.8 661.3 1181.0 670.0C1183.2 678.7 1187.7 691.7 1189.0 696.0" fill="none" stroke="url(#g16)" stroke-width="9" stroke-linecap="butt"/>
<path d="M1227.0 540.0C1227.3 546.7 1228.3 567.3 1229.0 580.0C1229.7 592.7 1230.7 610.0 1231.0 616.0" fill="none" stroke="url(#g17)" stroke-width="9" stroke-linecap="butt"/>
<path d="M1276.5 552.5C1275.8 558.8 1273.1 578.6 1272.0 590.0C1270.9 601.4 1270.3 615.8 1270.0 621.0" fill="none" stroke="url(#g18)" stroke-width="9" stroke-linecap="butt"/>
<path d="M1271.0 648.0C1271.2 649.6 1270.8 651.3 1272.0 657.5C1273.2 663.7 1275.5 676.2 1278.0 685.0C1280.5 693.8 1285.5 705.8 1287.0 710.0" fill="none" stroke="url(#g19)" stroke-width="9" stroke-linecap="butt"/>
<path d="M1305.0 550.0C1305.2 553.3 1304.9 562.9 1306.0 570.0C1307.1 577.1 1308.8 583.5 1311.5 592.5C1314.2 601.5 1320.7 618.8 1322.5 624.0" fill="none" stroke="url(#g20)" stroke-width="9.5" stroke-linecap="butt"/>
<path d="M1375.0 544.0L1415.0 536.5" fill="none" stroke="url(#g21)" stroke-width="12"/>
<path d="M1410.0 534.0L1508.0 577.0" fill="none" stroke="url(#g22)" stroke-width="11.5"/>
<path d="M1411.0 520.0C1410.8 527.0 1409.3 550.8 1410.0 562.0C1410.7 573.2 1413.7 579.0 1415.0 587.5C1416.3 596.0 1417.5 608.8 1418.0 613.0" fill="none" stroke="url(#g23)" stroke-width="9" stroke-linecap="butt"/>
<path d="M1425.0 500.0C1425.5 516.7 1426.7 566.3 1428.0 600.0C1429.3 633.7 1432.2 685.0 1433.0 702.0" fill="none" stroke="url(#g24)" stroke-width="9.5" stroke-linecap="butt"/>
<polygon points="376.5,492.0 400.0,495.0 470.0,504.0 572.0,514.0 641.0,521.0 682.0,527.0 1000.0,578.8 1200.0,610.6 1275.0,620.0 1364.0,632.5 1366.0,642.0 1331.0,660.0 1300.0,658.4 1000.0,616.0 640.0,557.5 600.0,552.0 323.4,520.0 322.5,511.5" fill="url(#g25)" />
<polygon points="560.0,512.0 641.0,521.0 682.0,527.0 930.0,567.5 930.0,605.5 640.0,557.5 560.0,547.5" fill="url(#g26)" mask="url(#mfade)"/>
<path d="M343.0 411.0C342.8 414.2 342.6 423.5 341.8 430.0C340.9 436.5 339.2 443.3 337.8 450.0C336.2 456.7 334.3 463.3 332.8 470.0C331.2 476.7 329.5 483.3 328.2 490.0C327.0 496.7 326.0 505.0 325.5 510.0C325.0 515.0 324.6 514.0 325.0 520.0C325.4 526.0 326.0 537.7 328.0 546.0C330.0 554.3 333.5 562.7 337.0 570.0C340.5 577.3 346.8 586.7 348.8 590.0" fill="none" stroke="url(#g27)" stroke-width="8.5" stroke-linecap="butt"/>
<path d="M395.0 419.0C394.7 422.5 393.7 434.0 393.0 440.0C392.3 446.0 391.8 450.0 391.0 455.0C390.2 460.0 389.6 464.2 388.5 470.0C387.4 475.8 385.5 483.3 384.2 490.0C383.0 496.7 381.8 504.2 381.2 510.0C380.7 515.8 380.8 519.6 381.0 525.0C381.2 530.4 381.0 534.7 382.5 542.5C384.0 550.3 386.9 562.8 390.0 572.0C393.1 581.2 399.2 593.7 401.0 598.0" fill="none" stroke="url(#g28)" stroke-width="8.5" stroke-linecap="butt"/>
<path d="M579.0 455.0C578.7 460.8 577.4 478.3 577.0 490.0C576.6 501.7 576.6 519.2 576.5 525.0" fill="none" stroke="url(#g29)" stroke-width="8" stroke-linecap="butt"/>
<path d="M580.5 540.0L632.5 459.0" fill="none" stroke="url(#g30)" stroke-width="8"/>
<path d="M580.5 540.0L639.5 631.0" fill="none" stroke="url(#g31)" stroke-width="8"/>
<path d="M582.6 447.0C582.3 455.8 581.4 484.5 581.0 500.0C580.6 515.5 580.2 526.7 580.5 540.0C580.8 553.3 581.8 565.7 583.0 580.0C584.2 594.3 587.2 618.3 588.0 626.0" fill="none" stroke="url(#g32)" stroke-width="10.5" stroke-linecap="butt"/>
<path d="M636.7 456.0C636.8 470.0 636.4 510.5 637.0 540.0C637.6 569.5 639.8 617.5 640.3 633.0" fill="none" stroke="url(#g33)" stroke-width="8.5" stroke-linecap="butt"/>
<path d="M720.0 470.0L722.0 647.0" fill="none" stroke="url(#g34)" stroke-width="8" stroke-linecap="butt"/>
<path d="M791.0 480.0L794.0 657.0" fill="none" stroke="url(#g35)" stroke-width="8" stroke-linecap="butt"/>
<path d="M850.0 490.0L852.0 666.0" fill="none" stroke="url(#g36)" stroke-width="8" stroke-linecap="butt"/>
<path d="M946.0 502.0C944.8 515.0 940.2 562.8 938.8 580.0C937.3 597.2 937.0 594.2 937.5 605.0C938.0 615.8 939.9 632.5 942.0 645.0C944.1 657.5 948.7 674.2 950.0 680.0" fill="none" stroke="url(#g37)" stroke-width="9" stroke-linecap="butt"/>
<path d="M1042.0 518.0C1041.2 525.0 1038.3 549.2 1037.0 560.0C1035.7 570.8 1034.7 571.8 1034.0 582.5C1033.3 593.2 1032.3 611.1 1033.0 624.0C1033.7 636.9 1035.4 648.2 1038.0 660.0C1040.6 671.8 1047.0 689.2 1048.8 695.0" fill="none" stroke="url(#g38)" stroke-width="9" stroke-linecap="butt"/>
<path d="M1139.0 532.0C1138.0 538.3 1134.5 559.1 1133.0 570.0C1131.5 580.9 1130.8 586.0 1130.0 597.5C1129.2 609.0 1127.7 626.1 1128.4 639.0C1129.1 651.9 1131.2 663.3 1134.0 675.0C1136.8 686.7 1143.2 703.3 1145.0 709.0" fill="none" stroke="url(#g39)" stroke-width="9" stroke-linecap="butt"/>
<path d="M1240.0 547.0C1239.2 553.3 1236.2 573.5 1235.0 585.0C1233.8 596.5 1233.1 604.8 1232.5 616.0C1231.9 627.2 1230.6 639.7 1231.5 652.0C1232.4 664.3 1235.1 678.2 1238.0 690.0C1240.9 701.8 1247.2 717.5 1249.0 723.0" fill="none" stroke="url(#g40)" stroke-width="9" stroke-linecap="butt"/>
<path d="M1329.7 555.6C1329.2 563.0 1327.6 583.4 1327.0 600.0C1326.4 616.6 1325.5 638.3 1326.0 655.0C1326.5 671.7 1328.0 686.2 1330.0 700.0C1332.0 713.8 1336.7 731.2 1338.0 737.5" fill="none" stroke="url(#g41)" stroke-width="9" stroke-linecap="butt"/>
<path d="M1513.0 577.0C1505.8 580.2 1484.2 589.5 1470.0 596.0C1455.8 602.5 1443.2 609.8 1427.5 616.0C1411.8 622.2 1390.6 627.7 1376.0 633.0C1361.4 638.3 1346.0 645.5 1340.0 648.0" fill="none" stroke="url(#g42)" stroke-width="11"/>
<path d="M1372.8 540.0C1372.3 548.3 1370.5 574.6 1370.0 590.0C1369.5 605.4 1369.3 617.5 1370.0 632.5C1370.7 647.5 1372.2 664.4 1374.0 680.0C1375.8 695.6 1379.8 718.3 1381.0 726.0" fill="none" stroke="url(#g43)" stroke-width="9" stroke-linecap="butt"/>
<path d="M1376.0 538.0L1427.5 613.0" fill="none" stroke="url(#g44)" stroke-width="9.5"/>
<path d="M1426.0 617.5L1383.0 724.0" fill="none" stroke="url(#g45)" stroke-width="9"/>
<path d="M1515.0 439.0C1514.9 453.3 1514.3 501.5 1514.5 525.0C1514.7 548.5 1514.5 557.4 1516.0 580.0C1517.5 602.6 1522.2 647.2 1523.5 660.6" fill="none" stroke="url(#g46)" stroke-width="10.5" stroke-linecap="butt"/>
<polygon points="347.0,413.0 346.0,398.0 522.0,319.0 640.0,333.0 822.0,359.0 700.0,420.0 700.0,464.8 681.0,462.0 560.0,448.0" fill="url(#g47)" />
<polygon points="687.0,462.8 687.0,424.0 822.0,359.0 824.0,335.0 1036.0,364.0 1036.0,390.0 1250.0,423.5 1510.0,463.4 1510.0,483.0 1400.0,533.8 1334.0,562.0 1325.0,560.0 1200.0,541.0 1037.0,515.0" fill="url(#g48)" />
<polygon points="1037.0,474.6 1334.0,522.0 1334.0,562.0 1325.0,560.0 1200.0,541.0 1037.0,515.0" fill="url(#g49)" />
<polygon points="687.0,426.5 822.0,359.0 824.0,335.0 1036.0,364.0 1036.0,390.0 1110.0,401.5 1110.0,486.3 1037.0,474.6" fill="url(#g50)" />
<polygon points="687.0,426.5 1037.0,474.6 1037.0,515.0 687.0,462.8" fill="url(#g51)" />
<path d="M720.5 433.06875V477.06875" stroke="#0000d4" stroke-width="8" fill="none"/>
<path d="M791.5 442.83125V486.83125" stroke="#0000d4" stroke-width="8" fill="none"/>
<path d="M850.5 450.94375V494.94375" stroke="#0000d4" stroke-width="8" fill="none"/>
<path d="M946 464.075V508.075" stroke="#0000d4" stroke-width="8" fill="none"/>
<path d="M988 469.85V513.85" stroke="#0000d4" stroke-width="8" fill="none"/>
<polygon points="640.0,419.0 1037.0,473.6 1037.0,477.0 640.0,422.5" fill="#0000dc" />
<polygon points="346.0,375.5 640.0,419.0 640.0,422.5 346.0,379.0" fill="#0000f4" />
<polygon points="390.0,383.0 399.0,384.5 399.0,421.0 390.0,419.5" fill="#0000f0" />
<polygon points="632.5,419.0 641.0,420.0 641.0,459.0 632.5,458.0" fill="#0000d8" />
<polygon points="576.0,410.0 588.0,412.0 588.0,451.0 576.0,449.5" fill="#0000dc" />
<polygon points="687.0,422.5 797.0,372.5 807.5,372.5 807.5,373.8 698.8,423.5" fill="#fff" />
<polygon points="719.5,400.0 728.8,400.0 728.8,412.0 719.5,412.0" fill="#0000d0" />
<polygon points="742.0,390.0 760.0,385.0 760.0,397.0 742.0,402.0" fill="#00009c" />
<polygon points="522.0,291.0 824.0,332.0 824.0,335.5 522.0,294.5" fill="url(#g52)" />
<polygon points="522.0,291.0 532.0,292.0 532.0,326.0 522.0,324.0" fill="url(#g52)" />
<polygon points="621.0,304.4 630.0,305.4 630.0,339.4 621.0,337.4" fill="url(#g52)" />
<polygon points="720.0,317.9 729.0,318.9 729.0,352.9 720.0,350.9" fill="url(#g52)" />
<polygon points="338.0,373.0 430.0,385.7 430.0,389.5 346.0,377.5 346.0,400.0 347.0,413.0 339.0,412.0" fill="#0000f0" />
<polygon points="1036.0,364.0 1520.0,439.0 1520.0,443.0 1036.0,368.0" fill="url(#g53)" />
<polygon points="1126.5,378.0 1137.0,379.6 1137.0,408.0 1126.5,406.0" fill="url(#g53)" />
<polygon points="1222.0,392.8 1232.5,394.4 1232.5,422.8 1222.0,420.8" fill="url(#g53)" />
<polygon points="1319.0,407.9 1330.0,409.5 1330.0,437.8 1319.0,435.8" fill="url(#g53)" />
<polygon points="1415.0,422.7 1425.0,424.3 1425.0,452.7 1415.0,450.7" fill="url(#g53)" />
<polygon points="1510.0,439.0 1520.0,439.0 1520.0,490.0 1510.0,490.0" fill="#0090ff" />
<path d="M307.6 780.5L338 785.4" stroke="#ff0000" stroke-width="2.2"/><path d="M337 781.2L347.6 787L336.4 789.4Z" fill="#d00000"/><path d="M307.6 780.5L323 773.7" stroke="#00e000" stroke-width="2.2"/><path d="M321.5 771L331 770L325.5 777Z" fill="#00b000"/><path d="M307.6 781.5V746" stroke="#0000f0" stroke-width="2.4"/><path d="M304.2 747.8L307.6 737.2L311 747.8Z" fill="#0000e0"/><text x="305" y="732" font-size="10" fill="#2020f0" stroke="#2020f0" stroke-width="0.3">Z</text><text x="332.8" y="773" font-size="10" fill="#00e000" stroke="#00e000" stroke-width="0.3">Y</text><text x="353" y="792" font-size="10" fill="#ff2020" stroke="#ff2020" stroke-width="0.3">X</text>
<text x="252" y="139" font-size="12.3" fill="#000" textLength="158" lengthAdjust="spacingAndGlyphs">Déformations globales u [mm]</text>
<text x="252" y="155" font-size="12.3" fill="#000" textLength="220" lengthAdjust="spacingAndGlyphs">CR8 : Enveloppe Combinaisons Newmark</text>
</svg>
</div>
<div style="left:246px;top:930px;width:1352px;height:21px;background:#b9c0cc"></div>
<div style="left:246px;top:951px;width:1352px;height:28px;background:linear-gradient(#ebeef7,#e6e9f2 40%,#d5d9e3)"></div>
<div style="left:245px;top:979px;width:1353px;height:196px;background:#f0f0f0"></div>
<svg width="1600" height="1200" style="left:0;top:0" shape-rendering="crispEdges">
<rect x="245" y="979" width="1351" height="2" fill="#6b6b6b"/><rect x="245" y="979" width="2" height="156" fill="#6b6b6b"/>
<rect x="247" y="981" width="1349" height="2" fill="#fff"/><rect x="247" y="981" width="2" height="144" fill="#fff"/>
<rect x="1594" y="981" width="2" height="154" fill="#fff"/>
<rect x="305" y="1035.5" width="1272" height="17.5" fill="#dcdcdc"/>
<rect x="397" y="1108" width="79" height="14.5" fill="#dce6ff"/>
<rect x="484" y="1108" width="79" height="14.5" fill="#dce6ff"/>
<rect x="657" y="1108" width="79" height="14.5" fill="#dce6ff"/>
<rect x="744" y="1108" width="79" height="14.5" fill="#dce6ff"/>
<rect x="831" y="1108" width="78" height="14.5" fill="#dce6ff"/>
<rect x="917" y="1108" width="79" height="14.5" fill="#dce6ff"/>
<rect x="1004" y="1108" width="79" height="14.5" fill="#dce6ff"/>
<rect x="306" y="984" width="1271" height="13" fill="#e1e1e1"/>
<rect x="306.5" y="984.5" width="84" height="12.5" fill="#3399ff"/>
<text x="348.0" y="996.5" font-size="13" fill="#fff" stroke="#fff" stroke-width="0.3" text-anchor="middle" transform="translate(348.0 0) scale(0.86 1) translate(-348.0 0)">A</text>
<text x="434.5" y="996.5" font-size="13" fill="#111" stroke="#111" stroke-width="0.3" text-anchor="middle" transform="translate(434.5 0) scale(0.86 1) translate(-434.5 0)">B</text>
<text x="521.5" y="996.5" font-size="13" fill="#111" stroke="#111" stroke-width="0.3" text-anchor="middle" transform="translate(521.5 0) scale(0.86 1) translate(-521.5 0)">C</text>
<text x="608.0" y="996.5" font-size="13" fill="#111" stroke="#111" stroke-width="0.3" text-anchor="middle" transform="translate(608.0 0) scale(0.86 1) translate(-608.0 0)">D</text>
<text x="694.5" y="996.5" font-size="13" fill="#111" stroke="#111" stroke-width="0.3" text-anchor="middle" transform="translate(694.5 0) scale(0.86 1) translate(-694.5 0)">E</text>
<text x="781.5" y="996.5" font-size="13" fill="#111" stroke="#111" stroke-width="0.3" text-anchor="middle" transform="translate(781.5 0) scale(0.86 1) translate(-781.5 0)">F</text>
<text x="868.0" y="996.5" font-size="13" fill="#111" stroke="#111" stroke-width="0.3" text-anchor="middle" transform="translate(868.0 0) scale(0.86 1) translate(-868.0 0)">G</text>
<text x="954.5" y="996.5" font-size="13" fill="#111" stroke="#111" stroke-width="0.3" text-anchor="middle" transform="translate(954.5 0) scale(0.86 1) translate(-954.5 0)">H</text>
<text x="1041.5" y="996.5" font-size="13" fill="#111" stroke="#111" stroke-width="0.3" text-anchor="middle" transform="translate(1041.5 0) scale(0.86 1) translate(-1041.5 0)">I</text>
<text x="1128.0" y="996.5" font-size="13" fill="#111" stroke="#111" stroke-width="0.3" text-anchor="middle" transform="translate(1128.0 0) scale(0.86 1) translate(-1128.0 0)">J</text>
<text x="1374.0" y="996.5" font-size="13" fill="#111" stroke="#111" stroke-width="0.3" text-anchor="middle" transform="translate(1374.0 0) scale(0.86 1) translate(-1374.0 0)">K</text>
<rect x="305" y="997" width="1272" height="2" fill="#7a7a7a"/>
<rect x="249" y="1034" width="1328" height="1.5" fill="#7a7a7a"/>
<rect x="249" y="1052.5" width="1328" height="1" fill="#8c8c8c"/>
<rect x="249" y="1070.3" width="1328" height="1" fill="#8c8c8c"/>
<rect x="249" y="1088.1" width="1328" height="1" fill="#8c8c8c"/>
<rect x="249" y="1105.8" width="1328" height="1" fill="#8c8c8c"/>
<rect x="249" y="1123.5" width="1328" height="1" fill="#8c8c8c"/>
<rect x="249" y="983" width="1328" height="1" fill="#a0a0a0"/>
<rect x="304.5" y="983" width="1.5" height="141" fill="#6e6e6e"/>
<rect x="390.5" y="984" width="2" height="13" fill="#7a7a7a"/>
<rect x="391" y="999" width="1" height="125" fill="#8c8c8c"/>
<rect x="477.5" y="984" width="2" height="13" fill="#7a7a7a"/>
<rect x="478" y="1017" width="1" height="107" fill="#8c8c8c"/>
<rect x="564.5" y="984" width="2" height="13" fill="#7a7a7a"/>
<rect x="565" y="1017" width="1" height="107" fill="#8c8c8c"/>
<rect x="650.5" y="984" width="2" height="13" fill="#7a7a7a"/>
<rect x="651" y="1017" width="1" height="107" fill="#8c8c8c"/>
<rect x="737.5" y="984" width="2" height="13" fill="#7a7a7a"/>
<rect x="738" y="1017" width="1" height="107" fill="#8c8c8c"/>
<rect x="824.5" y="984" width="2" height="13" fill="#7a7a7a"/>
<rect x="825" y="1017" width="1" height="107" fill="#8c8c8c"/>
<rect x="910.5" y="984" width="2" height="13" fill="#7a7a7a"/>
<rect x="911" y="999" width="1" height="125" fill="#8c8c8c"/>
<rect x="997.5" y="984" width="2" height="13" fill="#7a7a7a"/>
<rect x="998" y="1017" width="1" height="107" fill="#8c8c8c"/>
<rect x="1084.5" y="984" width="2" height="13" fill="#7a7a7a"/>
<rect x="1085" y="1017" width="1" height="107" fill="#8c8c8c"/>
<rect x="1170.5" y="984" width="2" height="13" fill="#7a7a7a"/>
<rect x="1171" y="999" width="1" height="125" fill="#8c8c8c"/>
<rect x="1576" y="983" width="1" height="141" fill="#8c8c8c"/>
<rect x="397" y="1038.5" width="1" height="12" fill="#c4c4c4"/>
<rect x="397" y="1056" width="1" height="12" fill="#c4c4c4"/>
<rect x="397" y="1073.8" width="1" height="12" fill="#c4c4c4"/>
<rect x="397" y="1091.6" width="1" height="12" fill="#c4c4c4"/>
<rect x="397" y="1109.3" width="1" height="12" fill="#c4c4c4"/>
<rect x="484" y="1038.5" width="1" height="12" fill="#c4c4c4"/>
<rect x="484" y="1056" width="1" height="12" fill="#c4c4c4"/>
<rect x="484" y="1073.8" width="1" height="12" fill="#c4c4c4"/>
<rect x="484" y="1091.6" width="1" height="12" fill="#c4c4c4"/>
<rect x="484" y="1109.3" width="1" height="12" fill="#c4c4c4"/>
<rect x="571" y="1038.5" width="1" height="12" fill="#c4c4c4"/>
<rect x="571" y="1056" width="1" height="12" fill="#c4c4c4"/>
<rect x="571" y="1073.8" width="1" height="12" fill="#c4c4c4"/>
<rect x="571" y="1091.6" width="1" height="12" fill="#c4c4c4"/>
<rect x="571" y="1109.3" width="1" height="12" fill="#c4c4c4"/>
<rect x="657" y="1038.5" width="1" height="12" fill="#c4c4c4"/>
<rect x="657" y="1056" width="1" height="12" fill="#c4c4c4"/>
<rect x="657" y="1073.8" width="1" height="12" fill="#c4c4c4"/>
<rect x="657" y="1091.6" width="1" height="12" fill="#c4c4c4"/>
<rect x="657" y="1109.3" width="1" height="12" fill="#c4c4c4"/>
<rect x="744" y="1038.5" width="1" height="12" fill="#c4c4c4"/>
<rect x="744" y="1056" width="1" height="12" fill="#c4c4c4"/>
<rect x="744" y="1073.8" width="1" height="12" fill="#c4c4c4"/>
<rect x="744" y="1091.6" width="1" height="12" fill="#c4c4c4"/>
<rect x="744" y="1109.3" width="1" height="12" fill="#c4c4c4"/>
<rect x="831" y="1038.5" width="1" height="12" fill="#c4c4c4"/>
<rect x="831" y="1056" width="1" height="12" fill="#c4c4c4"/>
<rect x="831" y="1073.8" width="1" height="12" fill="#c4c4c4"/>
<rect x="831" y="1091.6" width="1" height="12" fill="#c4c4c4"/>
<rect x="831" y="1109.3" width="1" height="12" fill="#c4c4c4"/>
<rect x="917" y="1038.5" width="1" height="12" fill="#c4c4c4"/>
<rect x="917" y="1056" width="1" height="12" fill="#c4c4c4"/>
<rect x="917" y="1073.8" width="1" height="12" fill="#c4c4c4"/>
<rect x="917" y="1091.6" width="1" height="12" fill="#c4c4c4"/>
<rect x="917" y="1109.3" width="1" height="12" fill="#c4c4c4"/>
<rect x="1004" y="1038.5" width="1" height="12" fill="#c4c4c4"/>
<rect x="1004" y="1056" width="1" height="12" fill="#c4c4c4"/>
<rect x="1004" y="1073.8" width="1" height="12" fill="#c4c4c4"/>
<rect x="1004" y="1091.6" width="1" height="12" fill="#c4c4c4"/>
<rect x="1004" y="1109.3" width="1" height="12" fill="#c4c4c4"/>
<rect x="1091" y="1038.5" width="1" height="12" fill="#c4c4c4"/>
<rect x="1091" y="1056" width="1" height="12" fill="#c4c4c4"/>
<rect x="1091" y="1073.8" width="1" height="12" fill="#c4c4c4"/>
<rect x="1091" y="1091.6" width="1" height="12" fill="#c4c4c4"/>
<rect x="1091" y="1109.3" width="1" height="12" fill="#c4c4c4"/>
<rect x="249" y="1051" width="56" height="1.5" fill="#6e6e6e"/>
<rect x="249" y="1068.8" width="56" height="1.5" fill="#6e6e6e"/>
<rect x="249" y="1086.6" width="56" height="1.5" fill="#6e6e6e"/>
<rect x="249" y="1104.3" width="56" height="1.5" fill="#6e6e6e"/>
<rect x="249" y="1122" width="56" height="1.5" fill="#6e6e6e"/>
<rect x="250" y="1037" width="54" height="14" fill="#3399ff"/>
<rect x="306.5" y="1036.5" width="84" height="15.5" fill="#e0e0e0" stroke="#222" stroke-width="1" stroke-dasharray="1 1"/>
</svg>
<svg width="1600" height="1200" style="left:0;top:0">
<text x="249" y="944.5" font-size="12.5" fill="#444" textLength="220" lengthAdjust="spacingAndGlyphs">5.7 Facteurs de masse modale effective</text>
<text x="276" y="1011" font-size="13" fill="#111" stroke="#111" stroke-width="0.3" text-anchor="middle" transform="translate(276 0) scale(0.86 1) translate(-276 0)">Mode</text>
<text x="276" y="1025.5" font-size="13" fill="#111" stroke="#111" stroke-width="0.3" text-anchor="middle" transform="translate(276 0) scale(0.86 1) translate(-276 0)">n°</text>
<text x="348" y="1011" font-size="13" fill="#111" stroke="#111" stroke-width="0.3" text-anchor="middle" transform="translate(348 0) scale(0.86 1) translate(-348 0)">Masse modale</text>
<text x="651" y="1011" font-size="13" fill="#111" stroke="#111" stroke-width="0.3" text-anchor="middle" transform="translate(651 0) scale(0.86 1) translate(-651 0)">Masse modale effective</text>
<text x="1041" y="1011" font-size="13" fill="#111" stroke="#111" stroke-width="0.3" text-anchor="middle" transform="translate(1041 0) scale(0.86 1) translate(-1041 0)">Facteur de masse modale effective</text>
<text x="348.0" y="1029" font-size="13" fill="#111" stroke="#111" stroke-width="0.3" text-anchor="middle" transform="translate(348.0 0) scale(0.86 1) translate(-348.0 0)"><tspan>M</tspan><tspan font-size="10" dy="3">i</tspan><tspan dy="-3" font-size="1"> </tspan><tspan> [kg]</tspan></text>
<text x="434.5" y="1029" font-size="13" fill="#111" stroke="#111" stroke-width="0.3" text-anchor="middle" transform="translate(434.5 0) scale(0.86 1) translate(-434.5 0)"><tspan>m</tspan><tspan font-size="10" dy="3">eX</tspan><tspan dy="-3" font-size="1"> </tspan><tspan> [kg]</tspan></text>
<text x="521.5" y="1029" font-size="13" fill="#111" stroke="#111" stroke-width="0.3" text-anchor="middle" transform="translate(521.5 0) scale(0.86 1) translate(-521.5 0)"><tspan>m</tspan><tspan font-size="10" dy="3">eY</tspan><tspan dy="-3" font-size="1"> </tspan><tspan> [kg]</tspan></text>
<text x="608.0" y="1029" font-size="13" fill="#111" stroke="#111" stroke-width="0.3" text-anchor="middle" transform="translate(608.0 0) scale(0.86 1) translate(-608.0 0)"><tspan>m</tspan><tspan font-size="10" dy="3">eZ</tspan><tspan dy="-3" font-size="1"> </tspan><tspan> [kg]</tspan></text>
<text x="694.5" y="1029" font-size="13" fill="#111" stroke="#111" stroke-width="0.3" text-anchor="middle" transform="translate(694.5 0) scale(0.86 1) translate(-694.5 0)"><tspan>m</tspan><tspan font-size="10" dy="3">φX</tspan><tspan dy="-3" font-size="1"> </tspan><tspan> [kg.m</tspan><tspan font-size="10" dy="-2">2</tspan><tspan dy="2" font-size="1"> </tspan><tspan>]</tspan></text>
<text x="781.5" y="1029" font-size="13" fill="#111" stroke="#111" stroke-width="0.3" text-anchor="middle" transform="translate(781.5 0) scale(0.86 1) translate(-781.5 0)"><tspan>m</tspan><tspan font-size="10" dy="3">φY</tspan><tspan dy="-3" font-size="1"> </tspan><tspan> [kg.m</tspan><tspan font-size="10" dy="-2">2</tspan><tspan dy="2" font-size="1"> </tspan><tspan>]</tspan></text>
<text x="868.0" y="1029" font-size="13" fill="#111" stroke="#111" stroke-width="0.3" text-anchor="middle" transform="translate(868.0 0) scale(0.86 1) translate(-868.0 0)"><tspan>m</tspan><tspan font-size="10" dy="3">φZ</tspan><tspan dy="-3" font-size="1"> </tspan><tspan> [kg.m</tspan><tspan font-size="10" dy="-2">2</tspan><tspan dy="2" font-size="1"> </tspan><tspan>]</tspan></text>
<text x="954.5" y="1029" font-size="13" fill="#111" stroke="#111" stroke-width="0.3" text-anchor="middle" transform="translate(954.5 0) scale(0.86 1) translate(-954.5 0)"><tspan>f</tspan><tspan font-size="10" dy="3">meX</tspan><tspan dy="-3" font-size="1"> </tspan><tspan> [-]</tspan></text>
<text x="1041.5" y="1029" font-size="13" fill="#111" stroke="#111" stroke-width="0.3" text-anchor="middle" transform="translate(1041.5 0) scale(0.86 1) translate(-1041.5 0)"><tspan>f</tspan><tspan font-size="10" dy="3">meY</tspan><tspan dy="-3" font-size="1"> </tspan><tspan> [-]</tspan></text>
<text x="1128.0" y="1029" font-size="13" fill="#111" stroke="#111" stroke-width="0.3" text-anchor="middle" transform="translate(1128.0 0) scale(0.86 1) translate(-1128.0 0)"><tspan>f</tspan><tspan font-size="10" dy="3">meZ</tspan><tspan dy="-3" font-size="1"> </tspan><tspan> [-]</tspan></text>
<text x="276" y="1048.5" font-size="13" fill="#fff" stroke="#fff" stroke-width="0.3" text-anchor="middle" transform="translate(276 0) scale(0.86 1) translate(-276 0)">117</text>
<text x="386.5" y="1049.5" font-size="13" fill="#808080" stroke="#808080" stroke-width="0.3" text-anchor="end" transform="translate(386.5 0) scale(0.86 1) translate(-386.5 0)">3473.17</text>
<text x="473.5" y="1049.5" font-size="13" fill="#111" stroke="#111" stroke-width="0.3" text-anchor="end" transform="translate(473.5 0) scale(0.86 1) translate(-473.5 0)">72.69</text>
<text x="560.5" y="1049.5" font-size="13" fill="#111" stroke="#111" stroke-width="0.3" text-anchor="end" transform="translate(560.5 0) scale(0.86 1) translate(-560.5 0)">40.87</text>
<text x="646.5" y="1049.5" font-size="13" fill="#111" stroke="#111" stroke-width="0.3" text-anchor="end" transform="translate(646.5 0) scale(0.86 1) translate(-646.5 0)">0.00</text>
<text x="733.5" y="1049.5" font-size="13" fill="#111" stroke="#111" stroke-width="0.3" text-anchor="end" transform="translate(733.5 0) scale(0.86 1) translate(-733.5 0)">405.97</text>
<text x="820.5" y="1049.5" font-size="13" fill="#111" stroke="#111" stroke-width="0.3" text-anchor="end" transform="translate(820.5 0) scale(0.86 1) translate(-820.5 0)">1253.78</text>
<text x="906.5" y="1049.5" font-size="13" fill="#111" stroke="#111" stroke-width="0.3" text-anchor="end" transform="translate(906.5 0) scale(0.86 1) translate(-906.5 0)">11474.80</text>
<text x="993.5" y="1049.5" font-size="13" fill="#111" stroke="#111" stroke-width="0.3" text-anchor="end" transform="translate(993.5 0) scale(0.86 1) translate(-993.5 0)">0.000</text>
<text x="1080.5" y="1049.5" font-size="13" fill="#111" stroke="#111" stroke-width="0.3" text-anchor="end" transform="translate(1080.5 0) scale(0.86 1) translate(-1080.5 0)">0.000</text>
<text x="1166.5" y="1049.5" font-size="13" fill="#111" stroke="#111" stroke-width="0.3" text-anchor="end" transform="translate(1166.5 0) scale(0.86 1) translate(-1166.5 0)">0.000</text>
<text x="276" y="1066" font-size="13" fill="#111" stroke="#111" stroke-width="0.3" text-anchor="middle" transform="translate(276 0) scale(0.86 1) translate(-276 0)">118</text>
<text x="386.5" y="1067" font-size="13" fill="#111" stroke="#111" stroke-width="0.3" text-anchor="end" transform="translate(386.5 0) scale(0.86 1) translate(-386.5 0)">653.43</text>
<text x="473.5" y="1067" font-size="13" fill="#111" stroke="#111" stroke-width="0.3" text-anchor="end" transform="translate(473.5 0) scale(0.86 1) translate(-473.5 0)">39.29</text>
<text x="560.5" y="1067" font-size="13" fill="#111" stroke="#111" stroke-width="0.3" text-anchor="end" transform="translate(560.5 0) scale(0.86 1) translate(-560.5 0)">38.24</text>
<text x="646.5" y="1067" font-size="13" fill="#111" stroke="#111" stroke-width="0.3" text-anchor="end" transform="translate(646.5 0) scale(0.86 1) translate(-646.5 0)">0.00</text>
<text x="733.5" y="1067" font-size="13" fill="#111" stroke="#111" stroke-width="0.3" text-anchor="end" transform="translate(733.5 0) scale(0.86 1) translate(-733.5 0)">837.42</text>
<text x="820.5" y="1067" font-size="13" fill="#111" stroke="#111" stroke-width="0.3" text-anchor="end" transform="translate(820.5 0) scale(0.86 1) translate(-820.5 0)">5.69</text>
<text x="906.5" y="1067" font-size="13" fill="#111" stroke="#111" stroke-width="0.3" text-anchor="end" transform="translate(906.5 0) scale(0.86 1) translate(-906.5 0)">142.70</text>
<text x="993.5" y="1067" font-size="13" fill="#111" stroke="#111" stroke-width="0.3" text-anchor="end" transform="translate(993.5 0) scale(0.86 1) translate(-993.5 0)">0.000</text>
<text x="1080.5" y="1067" font-size="13" fill="#111" stroke="#111" stroke-width="0.3" text-anchor="end" transform="translate(1080.5 0) scale(0.86 1) translate(-1080.5 0)">0.000</text>
<text x="1166.5" y="1067" font-size="13" fill="#111" stroke="#111" stroke-width="0.3" text-anchor="end" transform="translate(1166.5 0) scale(0.86 1) translate(-1166.5 0)">0.000</text>
<text x="276" y="1083.8" font-size="13" fill="#111" stroke="#111" stroke-width="0.3" text-anchor="middle" transform="translate(276 0) scale(0.86 1) translate(-276 0)">119</text>
<text x="386.5" y="1084.8" font-size="13" fill="#111" stroke="#111" stroke-width="0.3" text-anchor="end" transform="translate(386.5 0) scale(0.86 1) translate(-386.5 0)">555.78</text>
<text x="473.5" y="1084.8" font-size="13" fill="#111" stroke="#111" stroke-width="0.3" text-anchor="end" transform="translate(473.5 0) scale(0.86 1) translate(-473.5 0)">0.88</text>
<text x="560.5" y="1084.8" font-size="13" fill="#111" stroke="#111" stroke-width="0.3" text-anchor="end" transform="translate(560.5 0) scale(0.86 1) translate(-560.5 0)">0.10</text>
<text x="646.5" y="1084.8" font-size="13" fill="#111" stroke="#111" stroke-width="0.3" text-anchor="end" transform="translate(646.5 0) scale(0.86 1) translate(-646.5 0)">0.00</text>
<text x="733.5" y="1084.8" font-size="13" fill="#111" stroke="#111" stroke-width="0.3" text-anchor="end" transform="translate(733.5 0) scale(0.86 1) translate(-733.5 0)">454.55</text>
<text x="820.5" y="1084.8" font-size="13" fill="#111" stroke="#111" stroke-width="0.3" text-anchor="end" transform="translate(820.5 0) scale(0.86 1) translate(-820.5 0)">149.07</text>
<text x="906.5" y="1084.8" font-size="13" fill="#111" stroke="#111" stroke-width="0.3" text-anchor="end" transform="translate(906.5 0) scale(0.86 1) translate(-906.5 0)">182.83</text>
<text x="993.5" y="1084.8" font-size="13" fill="#111" stroke="#111" stroke-width="0.3" text-anchor="end" transform="translate(993.5 0) scale(0.86 1) translate(-993.5 0)">0.000</text>
<text x="1080.5" y="1084.8" font-size="13" fill="#111" stroke="#111" stroke-width="0.3" text-anchor="end" transform="translate(1080.5 0) scale(0.86 1) translate(-1080.5 0)">0.000</text>
<text x="1166.5" y="1084.8" font-size="13" fill="#111" stroke="#111" stroke-width="0.3" text-anchor="end" transform="translate(1166.5 0) scale(0.86 1) translate(-1166.5 0)">0.000</text>
<text x="276" y="1101.6" font-size="13" fill="#111" stroke="#111" stroke-width="0.3" text-anchor="middle" transform="translate(276 0) scale(0.86 1) translate(-276 0)">120</text>
<text x="386.5" y="1102.6" font-size="13" fill="#111" stroke="#111" stroke-width="0.3" text-anchor="end" transform="translate(386.5 0) scale(0.86 1) translate(-386.5 0)">86.32</text>
<text x="473.5" y="1102.6" font-size="13" fill="#111" stroke="#111" stroke-width="0.3" text-anchor="end" transform="translate(473.5 0) scale(0.86 1) translate(-473.5 0)">14.02</text>
<text x="560.5" y="1102.6" font-size="13" fill="#111" stroke="#111" stroke-width="0.3" text-anchor="end" transform="translate(560.5 0) scale(0.86 1) translate(-560.5 0)">8.69</text>
<text x="646.5" y="1102.6" font-size="13" fill="#111" stroke="#111" stroke-width="0.3" text-anchor="end" transform="translate(646.5 0) scale(0.86 1) translate(-646.5 0)">0.00</text>
<text x="733.5" y="1102.6" font-size="13" fill="#111" stroke="#111" stroke-width="0.3" text-anchor="end" transform="translate(733.5 0) scale(0.86 1) translate(-733.5 0)">41.72</text>
<text x="820.5" y="1102.6" font-size="13" fill="#111" stroke="#111" stroke-width="0.3" text-anchor="end" transform="translate(820.5 0) scale(0.86 1) translate(-820.5 0)">56.24</text>
<text x="906.5" y="1102.6" font-size="13" fill="#111" stroke="#111" stroke-width="0.3" text-anchor="end" transform="translate(906.5 0) scale(0.86 1) translate(-906.5 0)">101.91</text>
<text x="993.5" y="1102.6" font-size="13" fill="#111" stroke="#111" stroke-width="0.3" text-anchor="end" transform="translate(993.5 0) scale(0.86 1) translate(-993.5 0)">0.000</text>
<text x="1080.5" y="1102.6" font-size="13" fill="#111" stroke="#111" stroke-width="0.3" text-anchor="end" transform="translate(1080.5 0) scale(0.86 1) translate(-1080.5 0)">0.000</text>
<text x="1166.5" y="1102.6" font-size="13" fill="#111" stroke="#111" stroke-width="0.3" text-anchor="end" transform="translate(1166.5 0) scale(0.86 1) translate(-1166.5 0)">0.000</text>
<text x="276" y="1119.3" font-size="13" fill="#111" stroke="#111" stroke-width="0.3" text-anchor="middle" transform="translate(276 0) scale(0.86 1) translate(-276 0)">Somme</text>
<text x="386.5" y="1120.3" font-size="13" fill="#111" stroke="#111" stroke-width="0.3" text-anchor="end" transform="translate(386.5 0) scale(0.86 1) translate(-386.5 0)">292096.96</text>
<text x="473.5" y="1120.3" font-size="13" fill="#111" stroke="#111" stroke-width="0.3" text-anchor="end" transform="translate(473.5 0) scale(0.86 1) translate(-473.5 0)">411704.13</text>
<text x="560.5" y="1120.3" font-size="13" fill="#111" stroke="#111" stroke-width="0.3" text-anchor="end" transform="translate(560.5 0) scale(0.86 1) translate(-560.5 0)">409987.89</text>
<text x="646.5" y="1120.3" font-size="13" fill="#111" stroke="#111" stroke-width="0.3" text-anchor="end" transform="translate(646.5 0) scale(0.86 1) translate(-646.5 0)">0.00</text>
<text x="733.5" y="1120.3" font-size="13" fill="#111" stroke="#111" stroke-width="0.3" text-anchor="end" transform="translate(733.5 0) scale(0.86 1) translate(-733.5 0)">1038367.23</text>
<text x="820.5" y="1120.3" font-size="13" fill="#111" stroke="#111" stroke-width="0.3" text-anchor="end" transform="translate(820.5 0) scale(0.86 1) translate(-820.5 0)">1060160.46</text>
<text x="906.5" y="1120.3" font-size="13" fill="#111" stroke="#111" stroke-width="0.3" text-anchor="end" transform="translate(906.5 0) scale(0.86 1) translate(-906.5 0)">33486313.83</text>
<text x="993.5" y="1120.3" font-size="13" fill="#111" stroke="#111" stroke-width="0.3" text-anchor="end" transform="translate(993.5 0) scale(0.86 1) translate(-993.5 0)">0.968</text>
<text x="1080.5" y="1120.3" font-size="13" fill="#111" stroke="#111" stroke-width="0.3" text-anchor="end" transform="translate(1080.5 0) scale(0.86 1) translate(-1080.5 0)">0.964</text>
<text x="1166.5" y="1120.3" font-size="13" fill="#111" stroke="#111" stroke-width="0.3" text-anchor="end" transform="translate(1166.5 0) scale(0.86 1) translate(-1166.5 0)">0.000</text>
<rect x="245" y="1134.5" width="1351" height="1.2" fill="#707070"/>
<path d="M245 1135.5L245 1150Q245 1154.5 249 1154.5L355 1154.5Q359 1154.5 359 1150L359 1135.5" fill="#f0f0f0" stroke="#707070" stroke-width="1.2"/>
<text x="250" y="1149.5" font-size="13" fill="#111" textLength="103" lengthAdjust="spacingAndGlyphs" stroke="#111" stroke-width="0.3">Fréquences propres</text>
<path d="M360 1135.5L360 1150Q360 1154.5 364 1154.5L498 1154.5Q502 1154.5 502 1150L502 1135.5" fill="#f0f0f0" stroke="#707070" stroke-width="1.2"/>
<text x="365" y="1149.5" font-size="13" fill="#111" textLength="131" lengthAdjust="spacingAndGlyphs" stroke="#111" stroke-width="0.3">Modes propres par nœud</text>
<path d="M503 1135.5L503 1150Q503 1154.5 507 1154.5L637 1154.5Q641 1154.5 641 1150L641 1135.5" fill="#f0f0f0" stroke="#707070" stroke-width="1.2"/>
<text x="508" y="1149.5" font-size="13" fill="#111" textLength="127" lengthAdjust="spacingAndGlyphs" stroke="#111" stroke-width="0.3">Modes propres par barre</text>
<path d="M643 1135.5L643 1150Q643 1154.5 647 1154.5L789 1154.5Q793 1154.5 793 1150L793 1135.5" fill="#f0f0f0" stroke="#707070" stroke-width="1.2"/>
<text x="648" y="1149.5" font-size="13" fill="#111" textLength="139" lengthAdjust="spacingAndGlyphs" stroke="#111" stroke-width="0.3">Modes propres par surface</text>
<path d="M794 1135.5L794 1150Q794 1154.5 798 1154.5L994 1154.5Q998 1154.5 998 1150L998 1135.5" fill="#f0f0f0" stroke="#707070" stroke-width="1.2"/>
<text x="798" y="1149.5" font-size="13" fill="#111" textLength="193" lengthAdjust="spacingAndGlyphs" stroke="#111" stroke-width="0.3">Modes propres par nœud de maillage</text>
<path d="M999 1135.5L999 1150Q999 1154.5 1003 1154.5L1189 1154.5Q1193 1154.5 1193 1150L1193 1135.5" fill="#f0f0f0" stroke="#707070" stroke-width="1.2"/>
<text x="1003" y="1149.5" font-size="13" fill="#111" textLength="183" lengthAdjust="spacingAndGlyphs" stroke="#111" stroke-width="0.3">Masses dans les points de maillage</text>
<path d="M1194 1133L1194 1150Q1194 1154.5 1198 1154.5L1390 1154.5Q1394 1154.5 1394 1150L1394 1133" fill="#ffffff" stroke="#707070" stroke-width="1.2"/>
<rect x="1194.6" y="1133" width="198.8" height="3.5" fill="#fff"/>
<text x="1199" y="1148.5" font-size="13" fill="#111" textLength="188" lengthAdjust="spacingAndGlyphs" stroke="#111" stroke-width="0.3">Facteurs de masse modale effective</text>
<rect x="1577" y="983" width="17" height="141" fill="#f0f0f0"/>
<rect x="1578" y="1089" width="15" height="17" fill="#cdcdcd"/>
<path d="M1581 994l4.5-4.5l4.5 4.5" stroke="#444" stroke-width="1.6" fill="none"/><path d="M1581 1112l4.5 4.5l4.5-4.5" stroke="#444" stroke-width="1.6" fill="none"/>
<path d="M1567.5 936.5h4v5h-4zM1566 941.5h7M1569.5 941.5v4" stroke="#555" stroke-width="1" fill="none"/>
<path d="M1583 936l8 8M1591 936l-8 8" stroke="#555" stroke-width="1.3"/>
</svg>
<svg width="1600" height="40" style="left:0;top:945px">
<defs><linearGradient id="tborg2" x1="0" y1="0" x2="0" y2="1"><stop offset="0" stop-color="#ffe6a8"/><stop offset="0.5" stop-color="#ffcf70"/><stop offset="1" stop-color="#ffb84a"/></linearGradient></defs>
<g transform="translate(258 11.5)"><rect x="0.500" y="0.500" width="17" height="17" fill="#f4f4f4" stroke="#555"/><rect x="0.500" y="0.500" width="17" height="3.500" fill="#3a4a8a"/><path d="M0.500 7.500h17M0.500 11h17M0.500 14.500h17M6 4v13.500M12 4v13.500" stroke="#999" stroke-width="0.800"/><path d="M3 16l12-10v10zM7.500 14.500l5-4.500v4.500z" fill="#58c858" stroke="#1a7a1a" stroke-width="0.900" fill-rule="evenodd"/></g>
<g transform="translate(282 11.5)"><rect x="0.500" y="0.500" width="17" height="17" fill="#f4f4f4" stroke="#555"/><rect x="0.500" y="0.500" width="17" height="3.500" fill="#3a4a8a"/><path d="M0.500 7.500h17M0.500 11h17M0.500 14.500h17M6 4v13.500M12 4v13.500" stroke="#999" stroke-width="0.800"/><path d="M5.500 5v8M3 10.500l2.500 3.500l2.500-3.500z" stroke="#2a3a8a" stroke-width="1.500" fill="#2a3a8a"/><path d="M3 15.500h5.500" stroke="#111" stroke-width="1.200"/><path d="M10 10h6M13 7v6" stroke="#2a3a8a" stroke-width="1.800"/></g>
<g transform="translate(307 11.5)"><rect x="0.500" y="0.500" width="17" height="17" fill="#f4f4f4" stroke="#555"/><rect x="0.500" y="0.500" width="17" height="3.500" fill="#3a4a8a"/><path d="M0.500 7.500h17M0.500 11h17M0.500 14.500h17M6 4v13.500M12 4v13.500" stroke="#999" stroke-width="0.800"/><path d="M6.500 5h5v5.500h3l-5.500 6l-5.500-6h3z" fill="#4a78d8" stroke="#1a2a7a" stroke-width="0.800"/><path d="M11.500 5v5.500h3l-5.500 6" fill="none" stroke="#111" stroke-width="1.300"/></g>
<g transform="translate(331 11.5)"><rect x="0.500" y="0.500" width="17" height="17" fill="#f4f4f4" stroke="#555"/><rect x="0.500" y="0.500" width="17" height="3.500" fill="#3a4a8a"/><path d="M0.500 7.500h17M0.500 11h17M0.500 14.500h17M6 4v13.500M12 4v13.500" stroke="#999" stroke-width="0.800"/><path d="M1 16V12.500L9 11.500Z" fill="#2040d0"/><path d="M9 11.500L17 7V11Z" fill="#e02020"/><path d="M1 12.500L17 11" stroke="#222" stroke-width="0.900"/></g>
<rect x="353.5" y="8.0" width="23" height="23.500" rx="2.500" fill="url(#tborg2)" stroke="#dca040" stroke-width="1"/>
<g transform="translate(356 11.5)"><rect x="0.500" y="0.500" width="17" height="17" fill="#f4f4f4" stroke="#555"/><rect x="0.500" y="0.500" width="17" height="3.500" fill="#3a4a8a"/><path d="M0.500 7.500h17M0.500 11h17M0.500 14.500h17M6 4v13.500M12 4v13.500" stroke="#999" stroke-width="0.800"/><path d="M1 11l1.500-4l1.500 7l2-9l1.500 8l1.500-5l1.500 6l1.500-8l1.500 7l1.500-4l1.500 3" fill="none" stroke="#e02020" stroke-width="1.200"/></g>
<path d="M381.5 12.5v17" stroke="#a8aebb"/><path d="M382.5 12.5v17" stroke="#f4f6fa"/>
<g transform="translate(389 11.5)"><rect x="0.500" y="2.500" width="17" height="12.500" fill="#eef0f4" stroke="#555" stroke-dasharray="2 1"/><path d="M1 15v2.500h3v-2.500M14 15v2.500h3v-2.500M6 16.500h6" stroke="#555" fill="none"/><path d="M2.500 8.500l6-5v3h7v4h-7v3z" fill="#4a88e8" stroke="#1a3a9a" stroke-width="0.900"/></g>
<g transform="translate(413 11.5)"><rect x="0.500" y="2.500" width="17" height="12.500" fill="#eef0f4" stroke="#555" stroke-dasharray="2 1"/><path d="M1 15v2.500h3v-2.500M14 15v2.500h3v-2.500M6 16.500h6" stroke="#555" fill="none"/><path d="M15.500 8.500l-6-5v3h-7v4h7v3z" fill="#4a88e8" stroke="#1a3a9a" stroke-width="0.900"/></g>
<path d="M438.5 12.5v17" stroke="#a8aebb"/><path d="M439.5 12.5v17" stroke="#f4f6fa"/>
<rect x="444.5" y="8.0" width="23" height="23.500" rx="2.500" fill="url(#tborg2)" stroke="#dca040" stroke-width="1"/>
<g transform="translate(447 11.5)"><rect x="3" y="1" width="8" height="5.500" fill="#f4f4f8" stroke="#555"/><rect x="3" y="1" width="8" height="2" fill="#6a7ab0"/><path d="M9 7q6 2 3 8l-4 2" fill="none" stroke="#2a3a9a" stroke-width="2.400"/><path d="M5 15.500l5-2.500l.5 5z" fill="#2a3a9a"/></g>
<rect x="468.5" y="8.0" width="23" height="23.500" rx="2.500" fill="url(#tborg2)" stroke="#dca040" stroke-width="1"/>
<g transform="translate(471 11.5)"><rect x="7" y="1" width="8" height="5.500" fill="#f4f4f8" stroke="#555"/><rect x="7" y="1" width="8" height="2" fill="#6a7ab0"/><path d="M9 7q-6 2-3 8l4 2" fill="none" stroke="#2a3a9a" stroke-width="2.400"/><path d="M13 15.500l-5-2.500l-.5 5z" fill="#2a3a9a"/></g>
<path d="M497.5 12.5v17" stroke="#a8aebb"/><path d="M498.5 12.5v17" stroke="#f4f6fa"/>
<g transform="translate(504 11.5)"><rect x="0.500" y="2.500" width="17" height="13" fill="#e4e6f4" stroke="#8a8ec0"/><rect x="0.500" y="2.500" width="17" height="3" fill="#7a7ec8"/><path d="M0.500 8.500h17M0.500 11h17M0.500 13.500h17" stroke="#7a7ec8" stroke-width="1.200"/><path d="M6 2.500v13M12 2.500v13" stroke="#f4f4fc" stroke-width="1"/></g>
<g transform="translate(529 11.5)"><rect x="0.500" y="2.500" width="17" height="14" fill="#ecebd8" stroke="#b8b490"/><path d="M0.500 7h17M0.500 11h17M6 2.500v14M12 2.500v14" stroke="#c8c4a0" stroke-width="0.800"/><path d="M8 13l5-10l2.500 1.500l-5 9.500l-3 1z" fill="#e8d870" stroke="#a89840" stroke-width="0.800"/></g>
<path d="M553.5 12.5v17" stroke="#a8aebb"/><path d="M554.5 12.5v17" stroke="#f4f6fa"/>
<g transform="translate(793 11.5)"><path d="M13 2.500l-10.500 6l10.500 6z" fill="#a8c0f0" stroke="#8098d0" stroke-width="0.600"/><path d="M11 6l-4.500 2.500l4.500 2.500z" fill="#eef2fc"/></g>
<g transform="translate(817 11.5)"><path d="M3 2.500l10.500 6l-10.500 6z" fill="#3a6ae0" stroke="#1a3aa0" stroke-width="0.600"/><path d="M5 6l4.500 2.500l-4.500 2.500z" fill="#dfe8ff"/></g>
<path d="M838.5 12.5v17" stroke="#a8aebb"/><path d="M839.5 12.5v17" stroke="#f4f6fa"/>
<g transform="translate(1081 11.5)"><path d="M13 2.500l-10.500 6l10.500 6z" fill="#3a6ae0" stroke="#1a3aa0" stroke-width="0.600"/><path d="M11 6l-4.500 2.500l4.500 2.500z" fill="#dfe8ff"/></g>
<g transform="translate(1105 11.5)"><path d="M3 2.500l10.500 6l-10.500 6z" fill="#3a6ae0" stroke="#1a3aa0" stroke-width="0.600"/><path d="M5 6l4.500 2.500l-4.500 2.500z" fill="#dfe8ff"/></g>
<path d="M1130.5 12.5v17" stroke="#a8aebb"/><path d="M1131.5 12.5v17" stroke="#f4f6fa"/>
<g transform="translate(1138 11.5)"><path d="M2 3v14M2 10h15" stroke="#b09090" stroke-width="1.100"/><path d="M2 10q3.500-9 7 0t7 0" fill="none" stroke="#d85050" stroke-width="1.300"/><path d="M13 2v7M11 3.500h4" stroke="#444" stroke-width="1.300"/></g>
<path d="M1163.5 12.5v17" stroke="#a8aebb"/><path d="M1164.5 12.5v17" stroke="#f4f6fa"/>
<g transform="translate(1172 11.5)"><rect x="9" y="0.500" width="9" height="6.500" fill="#f0f0f4" stroke="#777"/><rect x="9" y="0.500" width="9" height="2" fill="#6a7ab0"/><path d="M0.500 5h12l-4.500 5.500v6.500l-3-2v-4.500z" fill="#a8c4e8" stroke="#3a5a9a" stroke-width="0.900"/></g>
<g transform="translate(1195 11.5)"><path d="M1 11h4v6h-4zM3 11l8-4.500l4 1.500l-8 5" fill="#d8d8dc" stroke="#999" stroke-width="0.800"/><path d="M1 11h4M1 17h4M3 11v6" stroke="#d85050" stroke-width="1.300"/><circle cx="12.500" cy="5" r="4.800" fill="#7a8ac8" stroke="#4a5a9a"/><text x="11" y="8.500" font-size="9" font-weight="bold" fill="#fff" font-family="Liberation Serif,serif">i</text></g>
<rect x="1217.5" y="8.0" width="23" height="23.500" rx="2.500" fill="url(#tborg2)" stroke="#dca040" stroke-width="1"/>
<g transform="translate(1220 11.5)"><path d="M2 1v16.500h15" stroke="#6a4a2a" stroke-width="1.600" fill="none"/><rect x="3" y="2" width="8" height="2.600" fill="#d89090"/><rect x="3" y="5.500" width="5" height="2.600" fill="#90c890"/><rect x="3" y="9" width="11" height="2.600" fill="#d89090"/><rect x="3" y="12.500" width="7" height="2.600" fill="#90c890"/><path d="M11 2v3h-3v3.500h6v3.500h-4v3.500" fill="none" stroke="#6a4a2a" stroke-width="1"/></g>
<g transform="translate(1244 11.5)"><rect x="0.500" y="0.500" width="17" height="17" fill="#f4fff4" stroke="#1a7a2a" stroke-width="1.600"/><rect x="2.500" y="2.500" width="13" height="13" fill="#e8f4e8" stroke="#2a9a3a"/><path d="M4.500 4.500l9 9M13.500 4.500l-9 9" stroke="#1a8a2a" stroke-width="2.600"/></g>
<g transform="translate(1269 11.5)"><path d="M1 6l2-3h14l-1.500 3z" fill="#555" stroke="#222"/><rect x="1" y="6" width="14.500" height="10.500" fill="#3a3a3a" stroke="#111"/><rect x="3" y="3.500" width="11" height="2" fill="#e8e8e8"/><rect x="2.5" y="8.0" width="2" height="1.600" fill="#e0e0e0"/><rect x="2.5" y="10.8" width="2" height="1.600" fill="#e0e0e0"/><rect x="2.5" y="13.6" width="2" height="1.600" fill="#e0e0e0"/><rect x="5.7" y="8.0" width="2" height="1.600" fill="#e0e0e0"/><rect x="5.7" y="10.8" width="2" height="1.600" fill="#e0e0e0"/><rect x="5.7" y="13.6" width="2" height="1.600" fill="#e0e0e0"/><rect x="8.9" y="8.0" width="2" height="1.600" fill="#e0e0e0"/><rect x="8.9" y="10.8" width="2" height="1.600" fill="#e0e0e0"/><rect x="8.9" y="13.6" width="2" height="1.600" fill="#e0e0e0"/><rect x="12.100000000000001" y="8.0" width="2" height="1.600" fill="#e0e0e0"/><rect x="12.100000000000001" y="10.8" width="2" height="1.600" fill="#e0e0e0"/><rect x="12.100000000000001" y="13.6" width="2" height="1.600" fill="#e0e0e0"/></g>
<g transform="translate(1293 11.5)"><rect x="0" y="1" width="18" height="4.500" fill="#40b848" stroke="#1a7a22" stroke-width="0.700"/><path d="M2.500 1v2.500M5.500 1v2.500M8.500 1v2.500M11.500 1v2.500M14.500 1v2.500" stroke="#e8ffe8" stroke-width="0.900"/><text x="1" y="15.500" font-size="9.500" font-weight="bold" fill="#222">0.</text><text x="8" y="15.500" font-size="9.500" font-weight="bold" fill="#2a3ab0">00</text><path d="M8 17h10" stroke="#2a3ab0" stroke-width="1"/></g>
<rect x="561" y="8.3" width="210" height="22" fill="#fff"/><rect x="770.5" y="9.500" width="15" height="20" fill="#d8dce4" stroke="#eef0f5"/><path d="M774.500 18h7l-3.500 4z" fill="#555"/>
<text x="568" y="24" font-size="13" fill="#1a1a1a" stroke="#1a1a1a" stroke-width="0.3" textLength="29" lengthAdjust="spacingAndGlyphs">CVP1</text>
<rect x="846" y="8.3" width="213" height="22" fill="#fff"/><rect x="1058.5" y="9.500" width="15" height="20" fill="#d8dce4" stroke="#eef0f5"/><path d="M1062.500 18h7l-3.500 4z" fill="#555"/>
<text x="852" y="24" font-size="13" fill="#1a1a1a" stroke="#1a1a1a" stroke-width="0.3" textLength="178" lengthAdjust="spacingAndGlyphs">Mode propre 117 (f : 72.723 Hz)</text>
</svg>
</body></html>
